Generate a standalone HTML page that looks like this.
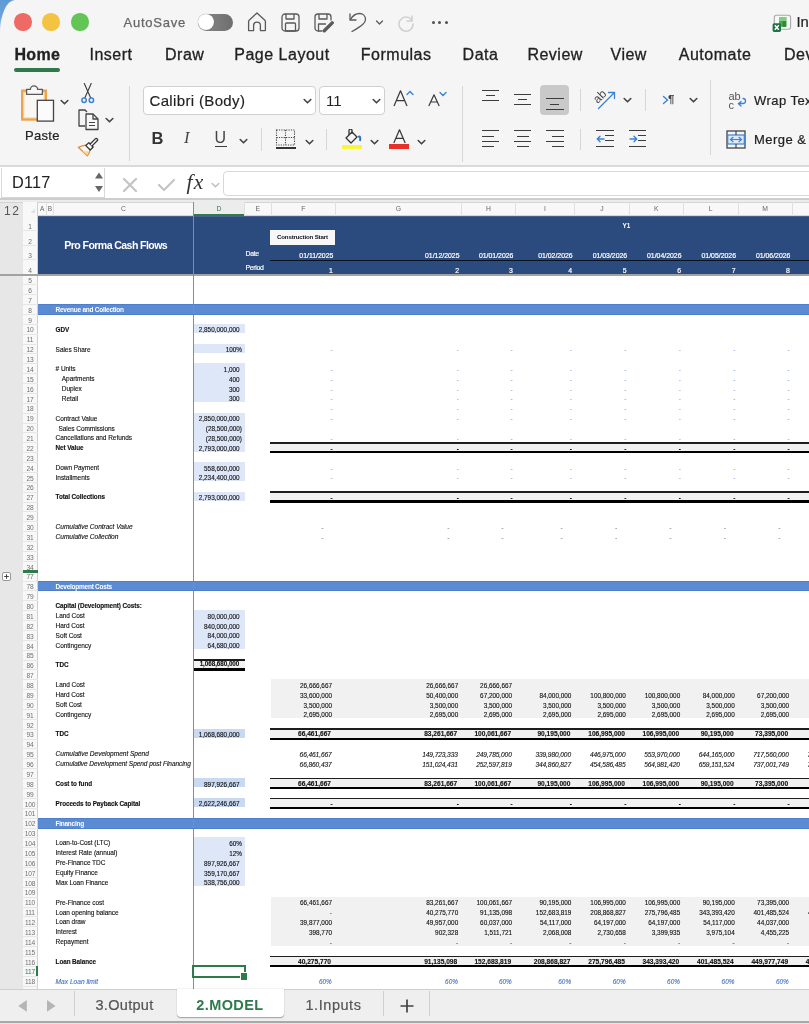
<!DOCTYPE html><html><head><meta charset="utf-8"><style>
*{margin:0;padding:0;box-sizing:border-box}
html,body{width:809px;height:1024px;overflow:hidden;background:#f5f5f5;font-family:'Liberation Sans', sans-serif}
.a{position:absolute}
.t{position:absolute;white-space:nowrap;line-height:1}
.c{position:absolute;white-space:nowrap;line-height:1;font-size:6.4px;color:#111;-webkit-text-stroke:0.12px currentColor}
.r{text-align:right}
.b{font-weight:bold}
.i{font-style:italic}
</style></head><body><div style="position:absolute;left:0;top:0;width:809px;height:1024px;overflow:hidden;will-change:transform">
<div class="a" style="left:0;top:0;width:40px;height:40px;background:linear-gradient(180deg,#5f9ad6 0%,#6aa3dc 45%,#e9f0f8 90%)"></div>
<div class="a" style="left:0;top:0;width:809px;height:1024px;background:#f5f5f5;border-top-left-radius:15px 33px"></div>
<div class="a" style="left:14.3px;top:13.3px;width:17.4px;height:17.4px;border-radius:50%;background:#ee6a65"></div>
<div class="a" style="left:42.3px;top:13.3px;width:17.4px;height:17.4px;border-radius:50%;background:#f4c342"></div>
<div class="a" style="left:71.3px;top:13.3px;width:17.4px;height:17.4px;border-radius:50%;background:#62c555"></div>
<div class="t" style="left:123.5px;top:15.8px;font-size:13px;letter-spacing:0.75px;color:#666;-webkit-text-stroke:0.25px #666">AutoSave</div>
<div class="a" style="left:197.5px;top:14px;width:35px;height:16.5px;border-radius:9px;background:linear-gradient(90deg,#8a8a8a,#6e6e6e)"></div>
<div class="a" style="left:198px;top:14.3px;width:16px;height:16px;border-radius:50%;background:#fff;box-shadow:0 0 1px rgba(0,0,0,.4)"></div>
<svg class="a" style="left:247px;top:12px" width="20" height="20" viewBox="0 0 20 20" fill="none" stroke="#5a5a5a" stroke-width="1.3" stroke-linecap="round" stroke-linejoin="round"><path d="M1.6 18.2 V9.6 Q1.6 8.6 2.4 7.9 L10 1 L17.6 7.9 Q18.4 8.6 18.4 9.6 V18.2 Q18.4 18.6 18 18.6 H13.4 V13.6 A3.4 3.4 0 0 0 6.6 13.6 V18.6 H2 Q1.6 18.6 1.6 18.2 Z"/></svg>
<svg class="a" style="left:281px;top:13px" width="19" height="19" viewBox="0 0 19 19" fill="none" stroke="#5a5a5a" stroke-width="1.3" stroke-linecap="round" stroke-linejoin="round"><rect x="1" y="1" width="17" height="17" rx="3"/><path d="M5 1.5 V6 H13 V1.5"/><rect x="4.5" y="10" width="10" height="8" rx="1"/></svg>
<svg class="a" style="left:314px;top:13px" width="21" height="20" viewBox="0 0 21 20" fill="none" stroke="#5a5a5a" stroke-width="1.3" stroke-linecap="round" stroke-linejoin="round"><path d="M8 18 H4 A3 3 0 0 1 1 15 V4 A3 3 0 0 1 4 1 H14 A3 3 0 0 1 17 4 V7"/><path d="M5 1.5 V6 H13 V1.5"/><path d="M4.5 18 V11 H11.5"/><path d="M10.3 17.8 L18.2 9.9" stroke-width="3.4"/></svg>
<svg class="a" style="left:348px;top:11px" width="20" height="22" viewBox="0 0 20 22" fill="none" stroke="#5a5a5a" stroke-width="1.3" stroke-linecap="round" stroke-linejoin="round"><path d="M2 3 V9 H8"/><path d="M2.5 8.5 C5 4 8 2.5 11.5 2.5 C15 2.5 17.5 5 17.5 8.5 C17.5 11.5 15 14 4 20.5"/></svg>
<svg class="a" style="left:375px;top:19px" width="9" height="7" viewBox="0 0 9 7" fill="none" stroke="#5a5a5a" stroke-width="1.3" stroke-linecap="round" stroke-linejoin="round"><path d="M1.5 2 L4.5 5 L7.5 2"/></svg>
<svg class="a" style="left:396px;top:12px" width="20" height="20" viewBox="0 0 20 20" fill="none" stroke="#cfcfcf" stroke-width="1.5" stroke-linecap="round"><path d="M16 4 V9 H11"/><path d="M16 8.5 A7 7 0 1 0 17 12"/></svg>
<div class="a" style="left:431.5px;top:21.2px;width:3px;height:3px;border-radius:50%;background:#505050"></div>
<div class="a" style="left:438.0px;top:21.2px;width:3px;height:3px;border-radius:50%;background:#505050"></div>
<div class="a" style="left:444.5px;top:21.2px;width:3px;height:3px;border-radius:50%;background:#505050"></div>
<svg class="a" style="left:772px;top:14px" width="20" height="19" viewBox="0 0 20 19"><rect x="2.3" y="1.3" width="16.3" height="14" rx="2.2" fill="#f7f7f7" stroke="#a9a9a9" stroke-width="1.1"/><rect x="7" y="3" width="7.3" height="9.8" fill="#4da84f"/><rect x="7" y="3" width="7.3" height="4" fill="#7fd07a"/><rect x="10.5" y="7" width="3.8" height="5.8" fill="#2f8a38"/><rect x="0.6" y="9.2" width="8.4" height="8.7" rx="1.6" fill="#1f7144"/><path d="M2.8 11.3 L6.8 15.8 M6.8 11.3 L2.8 15.8" stroke="#fff" stroke-width="1.5"/></svg>
<div class="t" style="left:796.5px;top:14.5px;font-size:14.8px;color:#222;-webkit-text-stroke:0.2px #222">In</div>
<div class="t" style="left:14.5px;top:47px;font-size:16px;letter-spacing:0.5px;color:#222;-webkit-text-stroke:0.3px #222;font-weight:bold;letter-spacing:0.3px">Home</div>
<div class="t" style="left:89.5px;top:47px;font-size:16px;letter-spacing:0.5px;color:#222;-webkit-text-stroke:0.3px #222;">Insert</div>
<div class="t" style="left:165px;top:47px;font-size:16px;letter-spacing:0.5px;color:#222;-webkit-text-stroke:0.3px #222;">Draw</div>
<div class="t" style="left:234.3px;top:47px;font-size:16px;letter-spacing:0.5px;color:#222;-webkit-text-stroke:0.3px #222;">Page Layout</div>
<div class="t" style="left:360.8px;top:47px;font-size:16px;letter-spacing:0.5px;color:#222;-webkit-text-stroke:0.3px #222;">Formulas</div>
<div class="t" style="left:462.6px;top:47px;font-size:16px;letter-spacing:0.5px;color:#222;-webkit-text-stroke:0.3px #222;">Data</div>
<div class="t" style="left:527.4px;top:47px;font-size:16px;letter-spacing:0.5px;color:#222;-webkit-text-stroke:0.3px #222;">Review</div>
<div class="t" style="left:610.5px;top:47px;font-size:16px;letter-spacing:0.5px;color:#222;-webkit-text-stroke:0.3px #222;">View</div>
<div class="t" style="left:678.8px;top:47px;font-size:16px;letter-spacing:0.5px;color:#222;-webkit-text-stroke:0.3px #222;">Automate</div>
<div class="t" style="left:784px;top:47px;font-size:16px;letter-spacing:0.5px;color:#222;-webkit-text-stroke:0.3px #222;">Dev</div>
<div class="a" style="left:14px;top:68px;width:46px;height:3.6px;border-radius:2px;background:#2f7a4b"></div>
<svg class="a" style="left:20px;top:84px" width="37" height="39" viewBox="0 0 37 39"><rect x="2.3" y="6.8" width="23.4" height="28.6" fill="#f8f7f4" stroke="#eea24f" stroke-width="2.6"/><rect x="3.8" y="8.3" width="20.4" height="25.6" fill="none" stroke="#f6d48e" stroke-width="1"/><path d="M6.6 10.4 V5.4 H10.4 A3.6 3.6 0 0 1 17.6 5.4 H22.4 V10.4 Z" fill="#f7f7f7" stroke="#5a5a5a" stroke-width="1.25" stroke-linejoin="round"/><rect x="17.3" y="16.3" width="16.2" height="20.8" fill="#fbfbfb" stroke="#444" stroke-width="1.3"/></svg>
<svg class="a" style="left:59.8px;top:99.2px" width="9" height="7" viewBox="0 0 9 7" fill="none" stroke="#444" stroke-width="1.6" stroke-linecap="round" stroke-linejoin="round"><path d="M1.2 1.5 L4.5 4.8 L7.8 1.5"/></svg>
<div class="t" style="left:25px;top:128.5px;font-size:13px;letter-spacing:0.3px;color:#222;-webkit-text-stroke:0.2px #222">Paste</div>
<svg class="a" style="left:80px;top:83px" width="16" height="21" viewBox="0 0 16 21" fill="none" stroke-linecap="round"><path d="M4.3 0.5 L10.6 14.8 M11.2 0.5 L4.9 14.8" stroke="#3a3a3a" stroke-width="1.1"/><circle cx="4.1" cy="17.3" r="2.2" stroke="#3b82d6" stroke-width="1.5" fill="#f5f5f5"/><circle cx="11.4" cy="17.3" r="2.2" stroke="#3b82d6" stroke-width="1.5" fill="#f5f5f5"/></svg>
<svg class="a" style="left:77px;top:109px" width="23" height="22" viewBox="0 0 23 22" fill="none" stroke="#444" stroke-width="1.3" stroke-linejoin="round"><path d="M8 17 H2 V1 H8 L10 3"/><path d="M9 5 H16 L21 10 V20.5 H9 Z" fill="#f7f7f7"/><path d="M16 5 V10 H21"/><path d="M12 13.5 H18 M12 16.5 H18" stroke-width="1"/></svg>
<svg class="a" style="left:104.5px;top:116.5px" width="9" height="7" viewBox="0 0 9 7" fill="none" stroke="#444" stroke-width="1.6" stroke-linecap="round" stroke-linejoin="round"><path d="M1.2 1.5 L4.5 4.8 L7.8 1.5"/></svg>
<svg class="a" style="left:77px;top:136px" width="22" height="21" viewBox="0 0 22 21" stroke-linejoin="round" stroke-linecap="round"><path d="M1.3 11.3 Q5 9.6 9.6 9 L13.4 12.8 Q12.6 16.8 10.3 19.8 Z" fill="#fafafa" stroke="#ea8d3a" stroke-width="1.3"/><path d="M5.5 15.3 L11.6 15.3 Q11.2 17.6 10.3 19.3 Z" fill="#f6d98a"/><path d="M8.8 9.6 L11.8 6.6 L16.2 11 L13.2 14 Z" fill="#fafafa" stroke="#333" stroke-width="1.3"/><path d="M13.2 8 L18.3 2.9 A1.3 1.3 0 0 1 20.2 4.8 L15.1 9.9" fill="#fafafa" stroke="#333" stroke-width="1.3"/></svg>
<div class="a" style="left:128.8px;top:85.5px;width:1px;height:75.5px;background:#d6d6d6"></div>
<div class="a" style="left:142.5px;top:85.6px;width:173px;height:29px;border:1px solid #d0d0d0;border-radius:4px;background:#fff"></div>
<div class="t" style="left:149.5px;top:92.5px;font-size:15px;letter-spacing:0.35px;color:#222;-webkit-text-stroke:0.15px #222">Calibri (Body)</div>
<svg class="a" style="left:302.5px;top:97.5px" width="9" height="7" viewBox="0 0 9 7" fill="none" stroke="#444" stroke-width="1.6" stroke-linecap="round" stroke-linejoin="round"><path d="M1.2 1.5 L4.5 4.8 L7.8 1.5"/></svg>
<div class="a" style="left:319px;top:85.6px;width:66px;height:29px;border:1px solid #d0d0d0;border-radius:4px;background:#fff"></div>
<div class="t" style="left:326px;top:92.5px;font-size:15px;color:#222">11</div>
<svg class="a" style="left:371.5px;top:97.5px" width="9" height="7" viewBox="0 0 9 7" fill="none" stroke="#444" stroke-width="1.6" stroke-linecap="round" stroke-linejoin="round"><path d="M1.2 1.5 L4.5 4.8 L7.8 1.5"/></svg>
<svg class="a" style="left:393px;top:90px" width="15" height="17" viewBox="0 0 15 17" fill="none" stroke="#3a3a3a" stroke-width="1.25" stroke-linejoin="round"><path d="M1 16 L7.5 0.8 L14 16 M3.4 10.6 H11.6"/></svg>
<svg class="a" style="left:405.5px;top:90px" width="8" height="6" viewBox="0 0 8 6" fill="none" stroke="#3b82d6" stroke-width="1.4" stroke-linecap="round"><path d="M1 4.5 L4 1.5 L7 4.5"/></svg>
<svg class="a" style="left:427.5px;top:94px" width="12" height="13" viewBox="0 0 12 13" fill="none" stroke="#3a3a3a" stroke-width="1.2" stroke-linejoin="round"><path d="M0.8 12 L6 0.8 L11.2 12 M2.6 8 H9.4"/></svg>
<svg class="a" style="left:438.5px;top:90.5px" width="8" height="6" viewBox="0 0 8 6" fill="none" stroke="#3b82d6" stroke-width="1.4" stroke-linecap="round"><path d="M1 1.5 L4 4.5 L7 1.5"/></svg>
<div class="t" style="left:151.5px;top:130px;font-size:16.5px;font-weight:bold;color:#333">B</div>
<div class="t" style="left:184px;top:130px;font-size:16.5px;font-style:italic;color:#444;font-family:Liberation Serif">I</div>
<div class="t" style="left:214.5px;top:130px;font-size:16px;color:#444">U</div>
<div class="a" style="left:214.5px;top:146.0px;width:12.0px;height:1px;background:#3c3c3c"></div>
<svg class="a" style="left:238.5px;top:137.5px" width="9" height="7" viewBox="0 0 9 7" fill="none" stroke="#444" stroke-width="1.6" stroke-linecap="round" stroke-linejoin="round"><path d="M1.2 1.5 L4.5 4.8 L7.8 1.5"/></svg>
<div class="a" style="left:260.9px;top:128px;width:1px;height:22.69999999999999px;background:#d6d6d6"></div>
<svg class="a" style="left:275px;top:129px" width="22" height="20" viewBox="0 0 22 20" fill="none" stroke="#444" stroke-width="1.1" stroke-dasharray="1.2 1.2"><rect x="1.5" y="1" width="18" height="15"/><path d="M10.5 1 V16 M1.5 8.5 H19.5"/></svg>
<div class="a" style="left:276px;top:147.2px;width:20px;height:1.6px;background:#333"></div>
<svg class="a" style="left:304.5px;top:138.5px" width="9" height="7" viewBox="0 0 9 7" fill="none" stroke="#444" stroke-width="1.6" stroke-linecap="round" stroke-linejoin="round"><path d="M1.2 1.5 L4.5 4.8 L7.8 1.5"/></svg>
<div class="a" style="left:326.2px;top:129px;width:1px;height:21px;background:#d6d6d6"></div>
<svg class="a" style="left:343px;top:129px" width="20" height="16" viewBox="0 0 20 16" fill="none" stroke="#333" stroke-width="1.3" stroke-linejoin="round"><path d="M3 9 L9 3 L14 8 L8 14 Z"/><path d="M6 6 V1.5 A1.5 1.5 0 0 1 9 1.5 V5"/><path d="M15 8 Q18 6 17 12" stroke="#2e6fc0" stroke-width="2"/></svg>
<div class="a" style="left:342px;top:144.5px;width:20px;height:4.7px;background:#f8f53a"></div>
<svg class="a" style="left:370px;top:138.5px" width="9" height="7" viewBox="0 0 9 7" fill="none" stroke="#444" stroke-width="1.6" stroke-linecap="round" stroke-linejoin="round"><path d="M1.2 1.5 L4.5 4.8 L7.8 1.5"/></svg>
<svg class="a" style="left:392.5px;top:129px" width="13" height="15" viewBox="0 0 13 15" fill="none" stroke="#3a3a3a" stroke-width="1.25" stroke-linejoin="round"><path d="M0.8 14 L6.5 0.8 L12.2 14 M2.8 9.4 H10.2"/></svg>
<div class="a" style="left:389px;top:144px;width:20px;height:5.2px;background:#e8302a"></div>
<svg class="a" style="left:416.5px;top:138.5px" width="9" height="7" viewBox="0 0 9 7" fill="none" stroke="#444" stroke-width="1.6" stroke-linecap="round" stroke-linejoin="round"><path d="M1.2 1.5 L4.5 4.8 L7.8 1.5"/></svg>
<div class="a" style="left:462.1px;top:85.5px;width:1px;height:76.0px;background:#d6d6d6"></div>
<div class="a" style="left:540.4px;top:85.2px;width:28.6px;height:29.5px;border-radius:4px;background:#c9c9c9"></div>
<div class="a" style="left:481.5px;top:90.0px;width:17.5px;height:1px;background:#3c3c3c"></div>
<div class="a" style="left:485.75px;top:95.0px;width:9.0px;height:1px;background:#3c3c3c"></div>
<div class="a" style="left:481.5px;top:100.0px;width:17.5px;height:1px;background:#3c3c3c"></div>
<div class="a" style="left:513.8px;top:94.0px;width:17.5px;height:1px;background:#3c3c3c"></div>
<div class="a" style="left:518.05px;top:99.0px;width:9.0px;height:1px;background:#3c3c3c"></div>
<div class="a" style="left:513.8px;top:104.0px;width:17.5px;height:1px;background:#3c3c3c"></div>
<div class="a" style="left:546.0px;top:98.0px;width:17.5px;height:1px;background:#3c3c3c"></div>
<div class="a" style="left:550.25px;top:104.0px;width:9.0px;height:1px;background:#3c3c3c"></div>
<div class="a" style="left:546.0px;top:109.0px;width:17.5px;height:1px;background:#3c3c3c"></div>
<div class="a" style="left:481.5px;top:130.0px;width:17.5px;height:1px;background:#3c3c3c"></div>
<div class="a" style="left:481.5px;top:136.0px;width:12.0px;height:1px;background:#3c3c3c"></div>
<div class="a" style="left:481.5px;top:141.0px;width:17.5px;height:1px;background:#3c3c3c"></div>
<div class="a" style="left:481.5px;top:146.0px;width:12.0px;height:1px;background:#3c3c3c"></div>
<div class="a" style="left:513.8px;top:130.0px;width:17.5px;height:1px;background:#3c3c3c"></div>
<div class="a" style="left:516.55px;top:136.0px;width:12.0px;height:1px;background:#3c3c3c"></div>
<div class="a" style="left:513.8px;top:141.0px;width:17.5px;height:1px;background:#3c3c3c"></div>
<div class="a" style="left:516.55px;top:146.0px;width:12.0px;height:1px;background:#3c3c3c"></div>
<div class="a" style="left:546.0px;top:130.0px;width:17.5px;height:1px;background:#3c3c3c"></div>
<div class="a" style="left:551.5px;top:136.0px;width:12.0px;height:1px;background:#3c3c3c"></div>
<div class="a" style="left:546.0px;top:141.0px;width:17.5px;height:1px;background:#3c3c3c"></div>
<div class="a" style="left:551.5px;top:146.0px;width:12.0px;height:1px;background:#3c3c3c"></div>
<div class="a" style="left:579.5px;top:89px;width:1px;height:21.599999999999994px;background:#d6d6d6"></div>
<div class="a" style="left:579.5px;top:128.6px;width:1px;height:21.900000000000006px;background:#d6d6d6"></div>
<svg class="a" style="left:594px;top:89px" width="23" height="21" viewBox="0 0 23 21"><text x="0" y="0" transform="translate(3.8 15) rotate(-45)" font-family="Liberation Sans" font-size="12" fill="#444">ab</text><path d="M4.5 19.5 L20 4 M14.5 3.5 H20.5 V9.5" fill="none" stroke="#3b82d6" stroke-width="1.3" stroke-linecap="round"/></svg>
<svg class="a" style="left:623px;top:97px" width="9" height="7" viewBox="0 0 9 7" fill="none" stroke="#444" stroke-width="1.6" stroke-linecap="round" stroke-linejoin="round"><path d="M1.2 1.5 L4.5 4.8 L7.8 1.5"/></svg>
<div class="a" style="left:644.8px;top:89px;width:1px;height:21.599999999999994px;background:#d6d6d6"></div>
<svg class="a" style="left:662px;top:95px" width="8" height="10" viewBox="0 0 8 10" fill="none" stroke="#3b82d6" stroke-width="1.4" stroke-linecap="round"><path d="M1.5 1.5 L5.5 5 L1.5 8.5"/></svg>
<div class="t" style="left:668px;top:94px;font-size:11.5px;font-weight:bold;color:#444">&#182;</div>
<svg class="a" style="left:688.5px;top:97px" width="9" height="7" viewBox="0 0 9 7" fill="none" stroke="#444" stroke-width="1.6" stroke-linecap="round" stroke-linejoin="round"><path d="M1.2 1.5 L4.5 4.8 L7.8 1.5"/></svg>
<div class="a" style="left:710.3px;top:79.5px;width:1px;height:75.5px;background:#d6d6d6"></div>
<div class="a" style="left:596.3px;top:130.0px;width:17.700000000000045px;height:1px;background:#3c3c3c"></div>
<div class="a" style="left:605.3px;top:135.0px;width:8.700000000000045px;height:1px;background:#3c3c3c"></div>
<div class="a" style="left:605.3px;top:140.0px;width:8.700000000000045px;height:1px;background:#3c3c3c"></div>
<div class="a" style="left:596.3px;top:146.0px;width:17.700000000000045px;height:1px;background:#3c3c3c"></div>
<svg class="a" style="left:596.3px;top:135px" width="9" height="8" viewBox="0 0 9 8" fill="none" stroke="#3b82d6" stroke-width="1.4" stroke-linecap="round" stroke-linejoin="round"><path d="M8 4 H1.5 M4 1.3 L1.3 4 L4 6.7"/></svg>
<div class="a" style="left:628.6px;top:130.0px;width:17.700000000000045px;height:1px;background:#3c3c3c"></div>
<div class="a" style="left:637.6px;top:135.0px;width:8.700000000000045px;height:1px;background:#3c3c3c"></div>
<div class="a" style="left:637.6px;top:140.0px;width:8.700000000000045px;height:1px;background:#3c3c3c"></div>
<div class="a" style="left:628.6px;top:146.0px;width:17.700000000000045px;height:1px;background:#3c3c3c"></div>
<svg class="a" style="left:628.6px;top:135px" width="9" height="8" viewBox="0 0 9 8" fill="none" stroke="#3b82d6" stroke-width="1.4" stroke-linecap="round" stroke-linejoin="round"><path d="M1 4 H7.5 M5 1.3 L7.7 4 L5 6.7"/></svg>
<svg class="a" style="left:728px;top:91px" width="20" height="20" viewBox="0 0 20 20"><text x="0.5" y="8.5" font-family="Liberation Sans" font-size="11" fill="#555">ab</text><text x="0.5" y="18.3" font-family="Liberation Sans" font-size="11" fill="#555">c</text><path d="M10.5 12.5 H15 A2.5 2.5 0 0 0 15 7.5 M13 10.5 L10.5 12.8 L13 15" fill="none" stroke="#3b82d6" stroke-width="1.3" stroke-linecap="round"/></svg>
<div class="t" style="left:754px;top:94.3px;font-size:13px;letter-spacing:0.45px;color:#222;-webkit-text-stroke:0.2px #222">Wrap Text</div>
<svg class="a" style="left:725.5px;top:129.5px" width="20" height="19" viewBox="0 0 20 19" fill="none"><rect x="1" y="1" width="18" height="17" stroke="#444" stroke-width="1.3"/><rect x="1.7" y="5" width="16.6" height="9" fill="#dbe9f8" stroke="#3b82d6" stroke-width="1.2"/><path d="M10 1 V5 M10 14 V18" stroke="#444" stroke-width="1.2"/><path d="M4.5 9.5 H15.5 M7 7.3 L4.5 9.5 L7 11.7 M13 7.3 L15.5 9.5 L13 11.7" stroke="#3b82d6" stroke-width="1.2" stroke-linecap="round"/></svg>
<div class="t" style="left:754px;top:132.7px;font-size:13px;letter-spacing:0.45px;color:#222;-webkit-text-stroke:0.2px #222">Merge &amp; Centre</div>
<div class="a" style="left:0;top:165.4px;width:809px;height:1.6px;background:#dadada"></div>
<div class="a" style="left:0;top:167px;width:809px;height:31.5px;background:#fff"></div>
<div class="a" style="left:0;top:198px;width:809px;height:1.8px;background:#cdcdcd"></div>
<div class="a" style="left:0;top:199.8px;width:809px;height:2px;background:#ececec"></div>
<div class="a" style="left:0;top:201.7px;width:809px;height:1px;background:#d4d4d4"></div>
<div class="a" style="left:1px;top:167.7px;width:104px;height:30.3px;border:1.2px solid #d8d8d8;border-top:none;background:#fff"></div>
<div class="t" style="left:12px;top:173.6px;font-size:16.3px;letter-spacing:0.2px;color:#222">D117</div>
<svg class="a" style="left:94px;top:172px" width="10" height="21" viewBox="0 0 10 21" fill="#666"><path d="M1 6.5 L5 0.5 L9 6.5 Z M1 14 L5 20 L9 14 Z"/></svg>
<svg class="a" style="left:122px;top:177px" width="16" height="16" viewBox="0 0 16 16" stroke="#c4c4c4" stroke-width="2.2" stroke-linecap="round"><path d="M2 2 L14 14 M14 2 L2 14"/></svg>
<svg class="a" style="left:157px;top:178px" width="19" height="14" viewBox="0 0 19 14" fill="none" stroke="#c4c4c4" stroke-width="2.2" stroke-linecap="round" stroke-linejoin="round"><path d="M2 7 L7 12 L17 2"/></svg>
<div class="t" style="left:186.5px;top:172px;font-size:21.5px;font-style:italic;color:#333;font-family:Liberation Serif;letter-spacing:1.2px">fx</div>
<svg class="a" style="left:211px;top:182px" width="9" height="7" viewBox="0 0 9 7" fill="none" stroke="#c0c0c0" stroke-width="1.6" stroke-linecap="round" stroke-linejoin="round"><path d="M1.2 1.5 L4.5 4.8 L7.8 1.5"/></svg>
<div class="a" style="left:223px;top:171px;width:600px;height:24.5px;border:1.2px solid #d8d8d8;border-radius:4px;background:#fff"></div>
<div class="a" style="left:0;top:202.7px;width:23px;height:786.5px;background:#e7e7e7"></div>
<div class="t" style="left:4px;top:204.5px;font-size:12px;color:#555;letter-spacing:0.5px">1<span style="margin-left:1px">2</span></div>
<div class="a" style="left:2.2px;top:571.9px;width:8.8px;height:8.8px;border:0.8px solid #9a9a9a;border-radius:2px;background:#fff"></div>
<svg class="a" style="left:2.2px;top:571.9px" width="9" height="9" viewBox="0 0 9 9" stroke="#444" stroke-width="1.1"><path d="M4.5 2.2 V6.8 M2.2 4.5 H6.8"/></svg>
<div class="a" style="left:38px;top:215.8px;width:771px;height:773.4000000000001px;background:#fff"></div>
<div class="a" style="left:23px;top:202.7px;width:786px;height:13.1px;background:#f8f8f8;border-bottom:1px solid #d4d4d4"></div>
<div class="a" style="left:23px;top:202.2px;width:15px;height:13.6px;background:#f8f8f8"></div>
<svg class="a" style="left:23px;top:202px" width="15" height="14" viewBox="0 0 15 14"><path d="M12 6.5 V11 H7.5 Z" fill="#e0e0e0"/></svg>
<div class="a" style="left:193.5px;top:202.2px;width:50.69999999999999px;height:13.6px;background:#ececec"></div>
<div class="a" style="left:193.5px;top:213.8px;width:50.69999999999999px;height:2px;background:#2f7a4b"></div>
<div class="a" style="left:46.0px;top:202.2px;width:1px;height:13.6px;background:#e0e0e0"></div>
<div class="t" style="left:38px;width:8.5px;top:205.5px;font-size:6.5px;color:#666;text-align:center">A</div>
<div class="a" style="left:53.0px;top:202.2px;width:1px;height:13.6px;background:#e0e0e0"></div>
<div class="t" style="left:46.5px;width:7.0px;top:205.5px;font-size:6.5px;color:#666;text-align:center">B</div>
<div class="a" style="left:193.0px;top:202.2px;width:1px;height:13.6px;background:#e0e0e0"></div>
<div class="t" style="left:53.5px;width:140.0px;top:205.5px;font-size:6.8px;color:#666;text-align:center">C</div>
<div class="a" style="left:243.7px;top:202.2px;width:1px;height:13.6px;background:#e0e0e0"></div>
<div class="t" style="left:193.5px;width:50.69999999999999px;top:205.5px;font-size:6.8px;color:#2f7a4b;text-align:center">D</div>
<div class="a" style="left:270.8px;top:202.2px;width:1px;height:13.6px;background:#e0e0e0"></div>
<div class="t" style="left:244.2px;width:27.100000000000023px;top:205.5px;font-size:6.8px;color:#666;text-align:center">E</div>
<div class="a" style="left:334.8px;top:202.2px;width:1px;height:13.6px;background:#e0e0e0"></div>
<div class="t" style="left:271.3px;width:64.0px;top:205.5px;font-size:6.8px;color:#666;text-align:center">F</div>
<div class="a" style="left:461.0px;top:202.2px;width:1px;height:13.6px;background:#e0e0e0"></div>
<div class="t" style="left:335.3px;width:126.19999999999999px;top:205.5px;font-size:6.8px;color:#666;text-align:center">G</div>
<div class="a" style="left:514.9px;top:202.2px;width:1px;height:13.6px;background:#e0e0e0"></div>
<div class="t" style="left:461.5px;width:53.89999999999998px;top:205.5px;font-size:6.8px;color:#666;text-align:center">H</div>
<div class="a" style="left:574.2px;top:202.2px;width:1px;height:13.6px;background:#e0e0e0"></div>
<div class="t" style="left:515.4px;width:59.30000000000007px;top:205.5px;font-size:6.8px;color:#666;text-align:center">I</div>
<div class="a" style="left:628.7px;top:202.2px;width:1px;height:13.6px;background:#e0e0e0"></div>
<div class="t" style="left:574.7px;width:54.5px;top:205.5px;font-size:6.8px;color:#666;text-align:center">J</div>
<div class="a" style="left:683.0px;top:202.2px;width:1px;height:13.6px;background:#e0e0e0"></div>
<div class="t" style="left:629.2px;width:54.299999999999955px;top:205.5px;font-size:6.8px;color:#666;text-align:center">K</div>
<div class="a" style="left:737.5px;top:202.2px;width:1px;height:13.6px;background:#e0e0e0"></div>
<div class="t" style="left:683.5px;width:54.5px;top:205.5px;font-size:6.8px;color:#666;text-align:center">L</div>
<div class="a" style="left:791.9px;top:202.2px;width:1px;height:13.6px;background:#e0e0e0"></div>
<div class="t" style="left:738px;width:54.39999999999998px;top:205.5px;font-size:6.8px;color:#666;text-align:center">M</div>
<div class="a" style="left:846.3px;top:202.2px;width:1px;height:13.6px;background:#e0e0e0"></div>
<div class="a" style="left:23px;top:215.8px;width:14.6px;height:773.4000000000001px;background:#f8f8f8;border-right:1px solid #cfcfcf"></div>
<div class="a" style="left:37.3px;top:202.2px;width:1px;height:13.6px;background:#d0d0d0"></div>
<div class="a" style="left:23px;top:230.07500000000002px;width:14.6px;height:1px;background:#e6e6e6"></div>
<div class="t" style="left:23px;width:14px;top:223.87500000000003px;font-size:6.6px;color:#707070;text-align:center;letter-spacing:-0.1px">1</div>
<div class="a" style="left:23px;top:244.775px;width:14.6px;height:1px;background:#e6e6e6"></div>
<div class="t" style="left:23px;width:14px;top:238.57500000000002px;font-size:6.6px;color:#707070;text-align:center;letter-spacing:-0.1px">2</div>
<div class="a" style="left:23px;top:259.475px;width:14.6px;height:1px;background:#e6e6e6"></div>
<div class="t" style="left:23px;width:14px;top:253.27500000000003px;font-size:6.6px;color:#707070;text-align:center;letter-spacing:-0.1px">3</div>
<div class="a" style="left:23px;top:274.17499999999995px;width:14.6px;height:1px;background:#e6e6e6"></div>
<div class="t" style="left:23px;width:14px;top:267.97499999999997px;font-size:6.6px;color:#707070;text-align:center;letter-spacing:-0.1px">4</div>
<div class="a" style="left:23px;top:284.277px;width:14.6px;height:1px;background:#e6e6e6"></div>
<div class="t" style="left:23px;width:14px;top:278.077px;font-size:6.6px;color:#707070;text-align:center;letter-spacing:-0.1px">5</div>
<div class="a" style="left:23px;top:294.154px;width:14.6px;height:1px;background:#e6e6e6"></div>
<div class="t" style="left:23px;width:14px;top:287.954px;font-size:6.6px;color:#707070;text-align:center;letter-spacing:-0.1px">6</div>
<div class="a" style="left:23px;top:304.031px;width:14.6px;height:1px;background:#e6e6e6"></div>
<div class="t" style="left:23px;width:14px;top:297.831px;font-size:6.6px;color:#707070;text-align:center;letter-spacing:-0.1px">7</div>
<div class="a" style="left:23px;top:313.90799999999996px;width:14.6px;height:1px;background:#e6e6e6"></div>
<div class="t" style="left:23px;width:14px;top:307.70799999999997px;font-size:6.6px;color:#707070;text-align:center;letter-spacing:-0.1px">8</div>
<div class="a" style="left:23px;top:323.78499999999997px;width:14.6px;height:1px;background:#e6e6e6"></div>
<div class="t" style="left:23px;width:14px;top:317.585px;font-size:6.6px;color:#707070;text-align:center;letter-spacing:-0.1px">9</div>
<div class="a" style="left:23px;top:333.662px;width:14.6px;height:1px;background:#e6e6e6"></div>
<div class="t" style="left:23px;width:14px;top:327.462px;font-size:6.6px;color:#707070;text-align:center;letter-spacing:-0.1px">10</div>
<div class="a" style="left:23px;top:343.539px;width:14.6px;height:1px;background:#e6e6e6"></div>
<div class="t" style="left:23px;width:14px;top:337.339px;font-size:6.6px;color:#707070;text-align:center;letter-spacing:-0.1px">11</div>
<div class="a" style="left:23px;top:353.416px;width:14.6px;height:1px;background:#e6e6e6"></div>
<div class="t" style="left:23px;width:14px;top:347.216px;font-size:6.6px;color:#707070;text-align:center;letter-spacing:-0.1px">12</div>
<div class="a" style="left:23px;top:363.293px;width:14.6px;height:1px;background:#e6e6e6"></div>
<div class="t" style="left:23px;width:14px;top:357.093px;font-size:6.6px;color:#707070;text-align:center;letter-spacing:-0.1px">13</div>
<div class="a" style="left:23px;top:373.17px;width:14.6px;height:1px;background:#e6e6e6"></div>
<div class="t" style="left:23px;width:14px;top:366.97px;font-size:6.6px;color:#707070;text-align:center;letter-spacing:-0.1px">14</div>
<div class="a" style="left:23px;top:383.04699999999997px;width:14.6px;height:1px;background:#e6e6e6"></div>
<div class="t" style="left:23px;width:14px;top:376.847px;font-size:6.6px;color:#707070;text-align:center;letter-spacing:-0.1px">15</div>
<div class="a" style="left:23px;top:392.924px;width:14.6px;height:1px;background:#e6e6e6"></div>
<div class="t" style="left:23px;width:14px;top:386.724px;font-size:6.6px;color:#707070;text-align:center;letter-spacing:-0.1px">16</div>
<div class="a" style="left:23px;top:402.801px;width:14.6px;height:1px;background:#e6e6e6"></div>
<div class="t" style="left:23px;width:14px;top:396.601px;font-size:6.6px;color:#707070;text-align:center;letter-spacing:-0.1px">17</div>
<div class="a" style="left:23px;top:412.678px;width:14.6px;height:1px;background:#e6e6e6"></div>
<div class="t" style="left:23px;width:14px;top:406.478px;font-size:6.6px;color:#707070;text-align:center;letter-spacing:-0.1px">18</div>
<div class="a" style="left:23px;top:422.555px;width:14.6px;height:1px;background:#e6e6e6"></div>
<div class="t" style="left:23px;width:14px;top:416.355px;font-size:6.6px;color:#707070;text-align:center;letter-spacing:-0.1px">19</div>
<div class="a" style="left:23px;top:432.43199999999996px;width:14.6px;height:1px;background:#e6e6e6"></div>
<div class="t" style="left:23px;width:14px;top:426.23199999999997px;font-size:6.6px;color:#707070;text-align:center;letter-spacing:-0.1px">20</div>
<div class="a" style="left:23px;top:442.309px;width:14.6px;height:1px;background:#e6e6e6"></div>
<div class="t" style="left:23px;width:14px;top:436.10900000000004px;font-size:6.6px;color:#707070;text-align:center;letter-spacing:-0.1px">21</div>
<div class="a" style="left:23px;top:452.186px;width:14.6px;height:1px;background:#e6e6e6"></div>
<div class="t" style="left:23px;width:14px;top:445.986px;font-size:6.6px;color:#707070;text-align:center;letter-spacing:-0.1px">22</div>
<div class="a" style="left:23px;top:462.063px;width:14.6px;height:1px;background:#e6e6e6"></div>
<div class="t" style="left:23px;width:14px;top:455.863px;font-size:6.6px;color:#707070;text-align:center;letter-spacing:-0.1px">23</div>
<div class="a" style="left:23px;top:471.94px;width:14.6px;height:1px;background:#e6e6e6"></div>
<div class="t" style="left:23px;width:14px;top:465.74px;font-size:6.6px;color:#707070;text-align:center;letter-spacing:-0.1px">24</div>
<div class="a" style="left:23px;top:481.817px;width:14.6px;height:1px;background:#e6e6e6"></div>
<div class="t" style="left:23px;width:14px;top:475.617px;font-size:6.6px;color:#707070;text-align:center;letter-spacing:-0.1px">25</div>
<div class="a" style="left:23px;top:491.694px;width:14.6px;height:1px;background:#e6e6e6"></div>
<div class="t" style="left:23px;width:14px;top:485.494px;font-size:6.6px;color:#707070;text-align:center;letter-spacing:-0.1px">26</div>
<div class="a" style="left:23px;top:501.57099999999997px;width:14.6px;height:1px;background:#e6e6e6"></div>
<div class="t" style="left:23px;width:14px;top:495.371px;font-size:6.6px;color:#707070;text-align:center;letter-spacing:-0.1px">27</div>
<div class="a" style="left:23px;top:511.44800000000004px;width:14.6px;height:1px;background:#e6e6e6"></div>
<div class="t" style="left:23px;width:14px;top:505.24800000000005px;font-size:6.6px;color:#707070;text-align:center;letter-spacing:-0.1px">28</div>
<div class="a" style="left:23px;top:521.3249999999999px;width:14.6px;height:1px;background:#e6e6e6"></div>
<div class="t" style="left:23px;width:14px;top:515.1249999999999px;font-size:6.6px;color:#707070;text-align:center;letter-spacing:-0.1px">29</div>
<div class="a" style="left:23px;top:531.202px;width:14.6px;height:1px;background:#e6e6e6"></div>
<div class="t" style="left:23px;width:14px;top:525.002px;font-size:6.6px;color:#707070;text-align:center;letter-spacing:-0.1px">30</div>
<div class="a" style="left:23px;top:541.079px;width:14.6px;height:1px;background:#e6e6e6"></div>
<div class="t" style="left:23px;width:14px;top:534.8789999999999px;font-size:6.6px;color:#707070;text-align:center;letter-spacing:-0.1px">31</div>
<div class="a" style="left:23px;top:550.9559999999999px;width:14.6px;height:1px;background:#e6e6e6"></div>
<div class="t" style="left:23px;width:14px;top:544.7559999999999px;font-size:6.6px;color:#707070;text-align:center;letter-spacing:-0.1px">32</div>
<div class="a" style="left:23px;top:560.833px;width:14.6px;height:1px;background:#e6e6e6"></div>
<div class="t" style="left:23px;width:14px;top:554.6329999999999px;font-size:6.6px;color:#707070;text-align:center;letter-spacing:-0.1px">33</div>
<div class="a" style="left:23px;top:570.7099999999999px;width:14.6px;height:1px;background:#e6e6e6"></div>
<div class="t" style="left:23px;width:14px;top:564.5099999999999px;font-size:6.6px;color:#707070;text-align:center;letter-spacing:-0.1px">34</div>
<div class="a" style="left:23px;top:580.587px;width:14.6px;height:1px;background:#e6e6e6"></div>
<div class="t" style="left:23px;width:14px;top:574.387px;font-size:6.6px;color:#707070;text-align:center;letter-spacing:-0.1px">77</div>
<div class="a" style="left:23px;top:590.4639999999999px;width:14.6px;height:1px;background:#e6e6e6"></div>
<div class="t" style="left:23px;width:14px;top:584.2639999999999px;font-size:6.6px;color:#707070;text-align:center;letter-spacing:-0.1px">78</div>
<div class="a" style="left:23px;top:600.3409999999999px;width:14.6px;height:1px;background:#e6e6e6"></div>
<div class="t" style="left:23px;width:14px;top:594.1409999999998px;font-size:6.6px;color:#707070;text-align:center;letter-spacing:-0.1px">79</div>
<div class="a" style="left:23px;top:610.218px;width:14.6px;height:1px;background:#e6e6e6"></div>
<div class="t" style="left:23px;width:14px;top:604.0179999999999px;font-size:6.6px;color:#707070;text-align:center;letter-spacing:-0.1px">80</div>
<div class="a" style="left:23px;top:620.095px;width:14.6px;height:1px;background:#e6e6e6"></div>
<div class="t" style="left:23px;width:14px;top:613.895px;font-size:6.6px;color:#707070;text-align:center;letter-spacing:-0.1px">81</div>
<div class="a" style="left:23px;top:629.972px;width:14.6px;height:1px;background:#e6e6e6"></div>
<div class="t" style="left:23px;width:14px;top:623.7719999999999px;font-size:6.6px;color:#707070;text-align:center;letter-spacing:-0.1px">82</div>
<div class="a" style="left:23px;top:639.8489999999999px;width:14.6px;height:1px;background:#e6e6e6"></div>
<div class="t" style="left:23px;width:14px;top:633.6489999999999px;font-size:6.6px;color:#707070;text-align:center;letter-spacing:-0.1px">83</div>
<div class="a" style="left:23px;top:649.7259999999999px;width:14.6px;height:1px;background:#e6e6e6"></div>
<div class="t" style="left:23px;width:14px;top:643.5259999999998px;font-size:6.6px;color:#707070;text-align:center;letter-spacing:-0.1px">84</div>
<div class="a" style="left:23px;top:659.603px;width:14.6px;height:1px;background:#e6e6e6"></div>
<div class="t" style="left:23px;width:14px;top:653.4029999999999px;font-size:6.6px;color:#707070;text-align:center;letter-spacing:-0.1px">85</div>
<div class="a" style="left:23px;top:669.48px;width:14.6px;height:1px;background:#e6e6e6"></div>
<div class="t" style="left:23px;width:14px;top:663.28px;font-size:6.6px;color:#707070;text-align:center;letter-spacing:-0.1px">86</div>
<div class="a" style="left:23px;top:679.357px;width:14.6px;height:1px;background:#e6e6e6"></div>
<div class="t" style="left:23px;width:14px;top:673.1569999999999px;font-size:6.6px;color:#707070;text-align:center;letter-spacing:-0.1px">87</div>
<div class="a" style="left:23px;top:689.2339999999999px;width:14.6px;height:1px;background:#e6e6e6"></div>
<div class="t" style="left:23px;width:14px;top:683.0339999999999px;font-size:6.6px;color:#707070;text-align:center;letter-spacing:-0.1px">88</div>
<div class="a" style="left:23px;top:699.1109999999999px;width:14.6px;height:1px;background:#e6e6e6"></div>
<div class="t" style="left:23px;width:14px;top:692.9109999999998px;font-size:6.6px;color:#707070;text-align:center;letter-spacing:-0.1px">89</div>
<div class="a" style="left:23px;top:708.9879999999999px;width:14.6px;height:1px;background:#e6e6e6"></div>
<div class="t" style="left:23px;width:14px;top:702.7879999999999px;font-size:6.6px;color:#707070;text-align:center;letter-spacing:-0.1px">90</div>
<div class="a" style="left:23px;top:718.865px;width:14.6px;height:1px;background:#e6e6e6"></div>
<div class="t" style="left:23px;width:14px;top:712.665px;font-size:6.6px;color:#707070;text-align:center;letter-spacing:-0.1px">91</div>
<div class="a" style="left:23px;top:728.742px;width:14.6px;height:1px;background:#e6e6e6"></div>
<div class="t" style="left:23px;width:14px;top:722.5419999999999px;font-size:6.6px;color:#707070;text-align:center;letter-spacing:-0.1px">92</div>
<div class="a" style="left:23px;top:738.6189999999999px;width:14.6px;height:1px;background:#e6e6e6"></div>
<div class="t" style="left:23px;width:14px;top:732.4189999999999px;font-size:6.6px;color:#707070;text-align:center;letter-spacing:-0.1px">93</div>
<div class="a" style="left:23px;top:748.496px;width:14.6px;height:1px;background:#e6e6e6"></div>
<div class="t" style="left:23px;width:14px;top:742.2959999999999px;font-size:6.6px;color:#707070;text-align:center;letter-spacing:-0.1px">94</div>
<div class="a" style="left:23px;top:758.3729999999999px;width:14.6px;height:1px;background:#e6e6e6"></div>
<div class="t" style="left:23px;width:14px;top:752.1729999999999px;font-size:6.6px;color:#707070;text-align:center;letter-spacing:-0.1px">95</div>
<div class="a" style="left:23px;top:768.25px;width:14.6px;height:1px;background:#e6e6e6"></div>
<div class="t" style="left:23px;width:14px;top:762.05px;font-size:6.6px;color:#707070;text-align:center;letter-spacing:-0.1px">96</div>
<div class="a" style="left:23px;top:778.127px;width:14.6px;height:1px;background:#e6e6e6"></div>
<div class="t" style="left:23px;width:14px;top:771.9269999999999px;font-size:6.6px;color:#707070;text-align:center;letter-spacing:-0.1px">97</div>
<div class="a" style="left:23px;top:788.0039999999999px;width:14.6px;height:1px;background:#e6e6e6"></div>
<div class="t" style="left:23px;width:14px;top:781.8039999999999px;font-size:6.6px;color:#707070;text-align:center;letter-spacing:-0.1px">98</div>
<div class="a" style="left:23px;top:797.881px;width:14.6px;height:1px;background:#e6e6e6"></div>
<div class="t" style="left:23px;width:14px;top:791.6809999999999px;font-size:6.6px;color:#707070;text-align:center;letter-spacing:-0.1px">99</div>
<div class="a" style="left:23px;top:807.7579999999999px;width:14.6px;height:1px;background:#e6e6e6"></div>
<div class="t" style="left:23px;width:14px;top:801.5579999999999px;font-size:6.6px;color:#707070;text-align:center;letter-spacing:-0.1px">100</div>
<div class="a" style="left:23px;top:817.635px;width:14.6px;height:1px;background:#e6e6e6"></div>
<div class="t" style="left:23px;width:14px;top:811.435px;font-size:6.6px;color:#707070;text-align:center;letter-spacing:-0.1px">101</div>
<div class="a" style="left:23px;top:827.512px;width:14.6px;height:1px;background:#e6e6e6"></div>
<div class="t" style="left:23px;width:14px;top:821.3119999999999px;font-size:6.6px;color:#707070;text-align:center;letter-spacing:-0.1px">102</div>
<div class="a" style="left:23px;top:837.389px;width:14.6px;height:1px;background:#e6e6e6"></div>
<div class="t" style="left:23px;width:14px;top:831.189px;font-size:6.6px;color:#707070;text-align:center;letter-spacing:-0.1px">103</div>
<div class="a" style="left:23px;top:847.266px;width:14.6px;height:1px;background:#e6e6e6"></div>
<div class="t" style="left:23px;width:14px;top:841.0659999999999px;font-size:6.6px;color:#707070;text-align:center;letter-spacing:-0.1px">104</div>
<div class="a" style="left:23px;top:857.1429999999999px;width:14.6px;height:1px;background:#e6e6e6"></div>
<div class="t" style="left:23px;width:14px;top:850.9429999999999px;font-size:6.6px;color:#707070;text-align:center;letter-spacing:-0.1px">105</div>
<div class="a" style="left:23px;top:867.02px;width:14.6px;height:1px;background:#e6e6e6"></div>
<div class="t" style="left:23px;width:14px;top:860.8199999999999px;font-size:6.6px;color:#707070;text-align:center;letter-spacing:-0.1px">106</div>
<div class="a" style="left:23px;top:876.8969999999999px;width:14.6px;height:1px;background:#e6e6e6"></div>
<div class="t" style="left:23px;width:14px;top:870.6969999999999px;font-size:6.6px;color:#707070;text-align:center;letter-spacing:-0.1px">107</div>
<div class="a" style="left:23px;top:886.774px;width:14.6px;height:1px;background:#e6e6e6"></div>
<div class="t" style="left:23px;width:14px;top:880.574px;font-size:6.6px;color:#707070;text-align:center;letter-spacing:-0.1px">108</div>
<div class="a" style="left:23px;top:896.651px;width:14.6px;height:1px;background:#e6e6e6"></div>
<div class="t" style="left:23px;width:14px;top:890.4509999999999px;font-size:6.6px;color:#707070;text-align:center;letter-spacing:-0.1px">109</div>
<div class="a" style="left:23px;top:906.528px;width:14.6px;height:1px;background:#e6e6e6"></div>
<div class="t" style="left:23px;width:14px;top:900.328px;font-size:6.6px;color:#707070;text-align:center;letter-spacing:-0.1px">110</div>
<div class="a" style="left:23px;top:916.405px;width:14.6px;height:1px;background:#e6e6e6"></div>
<div class="t" style="left:23px;width:14px;top:910.2049999999999px;font-size:6.6px;color:#707070;text-align:center;letter-spacing:-0.1px">111</div>
<div class="a" style="left:23px;top:926.2819999999999px;width:14.6px;height:1px;background:#e6e6e6"></div>
<div class="t" style="left:23px;width:14px;top:920.0819999999999px;font-size:6.6px;color:#707070;text-align:center;letter-spacing:-0.1px">112</div>
<div class="a" style="left:23px;top:936.159px;width:14.6px;height:1px;background:#e6e6e6"></div>
<div class="t" style="left:23px;width:14px;top:929.959px;font-size:6.6px;color:#707070;text-align:center;letter-spacing:-0.1px">113</div>
<div class="a" style="left:23px;top:946.036px;width:14.6px;height:1px;background:#e6e6e6"></div>
<div class="t" style="left:23px;width:14px;top:939.8359999999999px;font-size:6.6px;color:#707070;text-align:center;letter-spacing:-0.1px">114</div>
<div class="a" style="left:23px;top:955.913px;width:14.6px;height:1px;background:#e6e6e6"></div>
<div class="t" style="left:23px;width:14px;top:949.713px;font-size:6.6px;color:#707070;text-align:center;letter-spacing:-0.1px">115</div>
<div class="a" style="left:23px;top:965.79px;width:14.6px;height:1px;background:#e6e6e6"></div>
<div class="t" style="left:23px;width:14px;top:959.5899999999999px;font-size:6.6px;color:#707070;text-align:center;letter-spacing:-0.1px">116</div>
<div class="a" style="left:23px;top:975.667px;width:14.6px;height:1px;background:#e6e6e6"></div>
<div class="t" style="left:23px;width:14px;top:969.467px;font-size:6.6px;color:#2f7a4b;text-align:center;letter-spacing:-0.1px">117</div>
<div class="a" style="left:23px;top:985.544px;width:14.6px;height:1px;background:#e6e6e6"></div>
<div class="t" style="left:23px;width:14px;top:979.3439999999999px;font-size:6.6px;color:#707070;text-align:center;letter-spacing:-0.1px">118</div>
<div class="a" style="left:23px;top:569.7px;width:15px;height:3.3px;background:#2f7a4b"></div>
<div class="a" style="left:35.8px;top:966.2900000000001px;width:2.2px;height:9.9px;background:#2f7a4b"></div>
<div class="a" style="left:38px;top:216.3px;width:771px;height:57.5px;background:#2b4a7d"></div>
<div class="a" style="left:38px;top:215.8px;width:771px;height:1.2px;background:#4b6088"></div>
<div class="t b" style="left:38px;width:155.5px;top:239.5px;font-size:10.6px;letter-spacing:-0.6px;color:#fff;text-align:center">Pro Forma Cash Flows</div>
<div class="a" style="left:270.1px;top:229.8px;width:64.7px;height:14.8px;background:#f7f7f7"></div>
<div class="t b" style="left:270.1px;width:64.7px;top:234.3px;font-size:6.1px;letter-spacing:-0.15px;color:#111;text-align:center">Construction Start</div>
<div class="t" style="left:245.6px;top:250.5px;font-size:6.9px;letter-spacing:-0.35px;color:#fff;-webkit-text-stroke:0.15px #fff">Date</div>
<div class="t" style="left:245.6px;top:265px;font-size:6.9px;letter-spacing:-0.35px;color:#fff;-webkit-text-stroke:0.15px #fff">Period</div>
<div class="a" style="left:270.3px;top:259.5px;width:539px;height:1.6px;background:#0a1220"></div>
<div class="t b" style="left:622.4px;top:222.5px;font-size:6.4px;color:#fff">Y1</div>
<div class="t" style="right:475.7px;top:253.1px;font-size:6.9px;color:#fff;-webkit-text-stroke:0.2px #fff">01/11/2025</div>
<div class="t" style="right:476.2px;top:267.8px;font-size:6.9px;color:#fff;-webkit-text-stroke:0.2px #fff">1</div>
<div class="t" style="right:349.5px;top:253.1px;font-size:6.9px;color:#fff;-webkit-text-stroke:0.2px #fff">01/12/2025</div>
<div class="t" style="right:350.0px;top:267.8px;font-size:6.9px;color:#fff;-webkit-text-stroke:0.2px #fff">2</div>
<div class="t" style="right:295.6px;top:253.1px;font-size:6.9px;color:#fff;-webkit-text-stroke:0.2px #fff">01/01/2026</div>
<div class="t" style="right:296.1px;top:267.8px;font-size:6.9px;color:#fff;-webkit-text-stroke:0.2px #fff">3</div>
<div class="t" style="right:236.29999999999995px;top:253.1px;font-size:6.9px;color:#fff;-webkit-text-stroke:0.2px #fff">01/02/2026</div>
<div class="t" style="right:236.79999999999995px;top:267.8px;font-size:6.9px;color:#fff;-webkit-text-stroke:0.2px #fff">4</div>
<div class="t" style="right:181.79999999999995px;top:253.1px;font-size:6.9px;color:#fff;-webkit-text-stroke:0.2px #fff">01/03/2026</div>
<div class="t" style="right:182.29999999999995px;top:267.8px;font-size:6.9px;color:#fff;-webkit-text-stroke:0.2px #fff">5</div>
<div class="t" style="right:127.5px;top:253.1px;font-size:6.9px;color:#fff;-webkit-text-stroke:0.2px #fff">01/04/2026</div>
<div class="t" style="right:128.0px;top:267.8px;font-size:6.9px;color:#fff;-webkit-text-stroke:0.2px #fff">6</div>
<div class="t" style="right:73px;top:253.1px;font-size:6.9px;color:#fff;-webkit-text-stroke:0.2px #fff">01/05/2026</div>
<div class="t" style="right:73.5px;top:267.8px;font-size:6.9px;color:#fff;-webkit-text-stroke:0.2px #fff">7</div>
<div class="t" style="right:18.600000000000023px;top:253.1px;font-size:6.9px;color:#fff;-webkit-text-stroke:0.2px #fff">01/06/2026</div>
<div class="t" style="right:19.100000000000023px;top:267.8px;font-size:6.9px;color:#fff;-webkit-text-stroke:0.2px #fff">8</div>
<div class="t" style="right:-35.799999999999955px;top:253.1px;font-size:6.9px;color:#fff;-webkit-text-stroke:0.2px #fff">01/07/2026</div>
<div class="t" style="right:-35.299999999999955px;top:267.8px;font-size:6.9px;color:#fff;-webkit-text-stroke:0.2px #fff">9</div>
<div class="a" style="left:0;top:274.1px;width:809px;height:1.9px;background:#a2a2a2"></div>
<div class="a" style="left:193px;top:202.2px;width:1.3px;height:787.0px;background:#8c8c8c"></div>
<div class="a" style="left:38px;top:304.23099999999994px;width:155px;height:10.677000000000001px;background:#5b8bd3"></div>
<div class="a" style="left:194.3px;top:304.23099999999994px;width:615px;height:10.677000000000001px;background:#5b8bd3"></div>
<div class="a" style="left:38px;top:304.23099999999994px;width:771px;height:1px;background:#4f7fcb"></div>
<div class="a" style="left:38px;top:313.90799999999996px;width:771px;height:1px;background:#4f7fcb"></div>
<div class="t b" style="left:55.5px;top:307.23px;font-size:6.5px;letter-spacing:-0.25px;color:#fff">Revenue and Collection</div>
<div class="a" style="left:38px;top:580.787px;width:155px;height:10.677000000000001px;background:#5b8bd3"></div>
<div class="a" style="left:194.3px;top:580.787px;width:615px;height:10.677000000000001px;background:#5b8bd3"></div>
<div class="a" style="left:38px;top:580.787px;width:771px;height:1px;background:#4f7fcb"></div>
<div class="a" style="left:38px;top:590.4639999999999px;width:771px;height:1px;background:#4f7fcb"></div>
<div class="t b" style="left:55.5px;top:583.78px;font-size:6.5px;letter-spacing:-0.25px;color:#fff">Development Costs</div>
<div class="a" style="left:38px;top:817.835px;width:155px;height:10.677000000000001px;background:#5b8bd3"></div>
<div class="a" style="left:194.3px;top:817.835px;width:615px;height:10.677000000000001px;background:#5b8bd3"></div>
<div class="a" style="left:38px;top:817.835px;width:771px;height:1px;background:#4f7fcb"></div>
<div class="a" style="left:38px;top:827.512px;width:771px;height:1px;background:#4f7fcb"></div>
<div class="t b" style="left:55.5px;top:820.83px;font-size:6.5px;letter-spacing:-0.25px;color:#fff">Financing</div>
<div class="a" style="left:194.3px;top:323.885px;width:50.29999999999998px;height:9.276999999999987px;background:#dde7f8"></div>
<div class="a" style="left:194.3px;top:343.639px;width:50.29999999999998px;height:9.276999999999987px;background:#dde7f8"></div>
<div class="a" style="left:194.3px;top:363.39300000000003px;width:50.29999999999998px;height:38.90799999999996px;background:#dde7f8"></div>
<div class="a" style="left:194.3px;top:412.778px;width:50.29999999999998px;height:38.90799999999996px;background:#dde7f8"></div>
<div class="a" style="left:194.3px;top:462.163px;width:50.29999999999998px;height:19.153999999999996px;background:#dde7f8"></div>
<div class="a" style="left:194.3px;top:491.794px;width:50.29999999999998px;height:9.276999999999987px;background:#dde7f8"></div>
<div class="a" style="left:194.3px;top:610.3180000000001px;width:50.29999999999998px;height:38.90799999999979px;background:#dde7f8"></div>
<div class="a" style="left:194.3px;top:728.842px;width:50.29999999999998px;height:9.27699999999993px;background:#c9d9f1"></div>
<div class="a" style="left:194.3px;top:778.227px;width:50.29999999999998px;height:9.27699999999993px;background:#c9d9f1"></div>
<div class="a" style="left:194.3px;top:797.981px;width:50.29999999999998px;height:9.27699999999993px;background:#c9d9f1"></div>
<div class="a" style="left:194.3px;top:837.489px;width:50.29999999999998px;height:48.78499999999997px;background:#dde7f8"></div>
<div class="a" style="left:271px;top:679.457px;width:538px;height:38.908000000000015px;background:#f1f1f1"></div>
<div class="a" style="left:271px;top:896.7510000000001px;width:538px;height:48.784999999999854px;background:#f1f1f1"></div>
<div class="a" style="left:270.3px;top:443.609px;width:538.7px;height:8.877px;background:#f1f1f1"></div>
<div class="a" style="left:270.3px;top:442.00899999999996px;width:538.7px;height:1.6px;background:#1e1e1e"></div>
<div class="a" style="left:270.3px;top:451.109px;width:538.7px;height:2.3px;background:#000"></div>
<div class="a" style="left:270.3px;top:492.99399999999997px;width:538.7px;height:8.877px;background:#f1f1f1"></div>
<div class="a" style="left:270.3px;top:491.39399999999995px;width:538.7px;height:1.6px;background:#1e1e1e"></div>
<div class="a" style="left:270.3px;top:500.49399999999997px;width:538.7px;height:2.3px;background:#000"></div>
<div class="a" style="left:270.3px;top:730.0419999999999px;width:538.7px;height:8.877px;background:#f1f1f1"></div>
<div class="a" style="left:270.3px;top:728.442px;width:538.7px;height:1.6px;background:#1e1e1e"></div>
<div class="a" style="left:270.3px;top:737.5419999999999px;width:538.7px;height:2.3px;background:#000"></div>
<div class="a" style="left:270.3px;top:779.4269999999999px;width:538.7px;height:8.877px;background:#f1f1f1"></div>
<div class="a" style="left:270.3px;top:777.827px;width:538.7px;height:1.6px;background:#1e1e1e"></div>
<div class="a" style="left:270.3px;top:786.9269999999999px;width:538.7px;height:2.3px;background:#000"></div>
<div class="a" style="left:270.3px;top:799.1809999999999px;width:538.7px;height:8.877px;background:#f1f1f1"></div>
<div class="a" style="left:270.3px;top:797.581px;width:538.7px;height:1.6px;background:#1e1e1e"></div>
<div class="a" style="left:270.3px;top:806.6809999999999px;width:538.7px;height:2.3px;background:#000"></div>
<div class="a" style="left:270.3px;top:957.213px;width:538.7px;height:8.877px;background:#f1f1f1"></div>
<div class="a" style="left:270.3px;top:955.613px;width:538.7px;height:1.6px;background:#1e1e1e"></div>
<div class="a" style="left:270.3px;top:964.713px;width:538.7px;height:2.3px;background:#000"></div>
<div class="a" style="left:194.3px;top:660.1030000000001px;width:50.5px;height:8.877px;background:#f1f1f1"></div>
<div class="a" style="left:194.3px;top:659.3030000000001px;width:50.5px;height:1.7px;background:#1a1a1a"></div>
<div class="a" style="left:194.3px;top:668.08px;width:50.5px;height:2.5px;background:#000"></div>
<div class="c b" style="left:55.6px;top:326.51px;font-size:6.35px;letter-spacing:-0.08px;color:#111">GDV</div>
<div class="c " style="left:55.6px;top:346.54px;font-size:6.5px;letter-spacing:-0.05px;color:#111">Sales Share</div>
<div class="c " style="left:55.6px;top:366.29px;font-size:6.5px;letter-spacing:-0.05px;color:#111"># Units</div>
<div class="c " style="left:61.8px;top:376.17px;font-size:6.5px;letter-spacing:-0.05px;color:#111">Apartments</div>
<div class="c " style="left:61.8px;top:386.04px;font-size:6.5px;letter-spacing:-0.05px;color:#111">Duplex</div>
<div class="c " style="left:61.8px;top:395.92px;font-size:6.5px;letter-spacing:-0.05px;color:#111">Retail</div>
<div class="c " style="left:55.6px;top:415.68px;font-size:6.5px;letter-spacing:-0.05px;color:#111">Contract Value</div>
<div class="c " style="left:58.5px;top:425.55px;font-size:6.5px;letter-spacing:-0.05px;color:#111">Sales Commissions</div>
<div class="c " style="left:55.6px;top:435.43px;font-size:6.5px;letter-spacing:-0.05px;color:#111">Cancellations and Refunds</div>
<div class="c b" style="left:55.6px;top:445.03px;font-size:6.35px;letter-spacing:-0.08px;color:#111">Net Value</div>
<div class="c " style="left:55.6px;top:465.06px;font-size:6.5px;letter-spacing:-0.05px;color:#111">Down Payment</div>
<div class="c " style="left:55.6px;top:474.94px;font-size:6.5px;letter-spacing:-0.05px;color:#111">Installments</div>
<div class="c b" style="left:55.6px;top:494.42px;font-size:6.35px;letter-spacing:-0.08px;color:#111">Total Collections</div>
<div class="c i" style="left:55.6px;top:524.24px;font-size:6.6px;letter-spacing:-0.05px;color:#111">Cumulative Contract Value</div>
<div class="c i" style="left:55.6px;top:534.12px;font-size:6.6px;letter-spacing:-0.05px;color:#111">Cumulative Collection</div>
<div class="c b" style="left:55.6px;top:603.07px;font-size:6.35px;letter-spacing:-0.08px;color:#111">Capital (Development) Costs:</div>
<div class="c " style="left:55.6px;top:613.22px;font-size:6.5px;letter-spacing:-0.05px;color:#111">Land Cost</div>
<div class="c " style="left:55.6px;top:623.09px;font-size:6.5px;letter-spacing:-0.05px;color:#111">Hard Cost</div>
<div class="c " style="left:55.6px;top:632.97px;font-size:6.5px;letter-spacing:-0.05px;color:#111">Soft Cost</div>
<div class="c " style="left:55.6px;top:642.85px;font-size:6.5px;letter-spacing:-0.05px;color:#111">Contingency</div>
<div class="c b" style="left:55.6px;top:662.33px;font-size:6.35px;letter-spacing:-0.08px;color:#111">TDC</div>
<div class="c " style="left:55.6px;top:682.35px;font-size:6.5px;letter-spacing:-0.05px;color:#111">Land Cost</div>
<div class="c " style="left:55.6px;top:692.23px;font-size:6.5px;letter-spacing:-0.05px;color:#111">Hard Cost</div>
<div class="c " style="left:55.6px;top:702.11px;font-size:6.5px;letter-spacing:-0.05px;color:#111">Soft Cost</div>
<div class="c " style="left:55.6px;top:711.99px;font-size:6.5px;letter-spacing:-0.05px;color:#111">Contingency</div>
<div class="c b" style="left:55.6px;top:731.47px;font-size:6.35px;letter-spacing:-0.08px;color:#111">TDC</div>
<div class="c i" style="left:55.6px;top:751.41px;font-size:6.6px;letter-spacing:-0.05px;color:#111">Cumulative Development Spend</div>
<div class="a" style="left:53.5px;top:0;width:139.5px;height:1024px;overflow:hidden">
<div class="c i" style="left:2.1px;top:760.97px;font-size:6.5px;letter-spacing:-0.05px">Cumulative Development Spend post Financing</div>
</div>
<div class="c b" style="left:55.6px;top:780.85px;font-size:6.35px;letter-spacing:-0.08px;color:#111">Cost to fund</div>
<div class="c b" style="left:55.6px;top:800.61px;font-size:6.35px;letter-spacing:-0.08px;color:#111">Proceeds to Payback Capital</div>
<div class="c " style="left:55.6px;top:840.39px;font-size:6.5px;letter-spacing:-0.05px;color:#111">Loan-to-Cost (LTC)</div>
<div class="c " style="left:55.6px;top:850.26px;font-size:6.5px;letter-spacing:-0.05px;color:#111">Interest Rate (annual)</div>
<div class="c " style="left:55.6px;top:860.14px;font-size:6.5px;letter-spacing:-0.05px;color:#111">Pre-Finance TDC</div>
<div class="c " style="left:55.6px;top:870.02px;font-size:6.5px;letter-spacing:-0.05px;color:#111">Equity Finance</div>
<div class="c " style="left:55.6px;top:879.89px;font-size:6.5px;letter-spacing:-0.05px;color:#111">Max Loan Finance</div>
<div class="c " style="left:55.6px;top:899.65px;font-size:6.5px;letter-spacing:-0.05px;color:#111">Pre-Finance cost</div>
<div class="c " style="left:55.6px;top:909.53px;font-size:6.5px;letter-spacing:-0.05px;color:#111">Loan opening balance</div>
<div class="c " style="left:55.6px;top:919.40px;font-size:6.5px;letter-spacing:-0.05px;color:#111">Loan draw</div>
<div class="c " style="left:55.6px;top:929.28px;font-size:6.5px;letter-spacing:-0.05px;color:#111">Interest</div>
<div class="c " style="left:55.6px;top:939.16px;font-size:6.5px;letter-spacing:-0.05px;color:#111">Repayment</div>
<div class="c b" style="left:55.6px;top:958.64px;font-size:6.35px;letter-spacing:-0.08px;color:#111">Loan Balance</div>
<div class="c i" style="left:55.6px;top:978.58px;font-size:6.6px;letter-spacing:0px;color:#4472c4">Max Loan limit</div>
<div class="c r " style="right:569.40px;top:327.27px;font-size:6.4px;letter-spacing:0px;color:#111">2,850,000,000</div>
<div class="c r " style="right:569.40px;top:366.78px;font-size:6.4px;letter-spacing:0px;color:#111">1,000</div>
<div class="c r " style="right:569.40px;top:376.65px;font-size:6.4px;letter-spacing:0px;color:#111">400</div>
<div class="c r " style="right:569.40px;top:386.53px;font-size:6.4px;letter-spacing:0px;color:#111">300</div>
<div class="c r " style="right:569.40px;top:396.41px;font-size:6.4px;letter-spacing:0px;color:#111">300</div>
<div class="c r " style="right:569.40px;top:416.16px;font-size:6.4px;letter-spacing:0px;color:#111">2,850,000,000</div>
<div class="c r " style="right:569.40px;top:445.79px;font-size:6.4px;letter-spacing:0px;color:#111">2,793,000,000</div>
<div class="c r " style="right:569.40px;top:465.55px;font-size:6.4px;letter-spacing:0px;color:#111">558,600,000</div>
<div class="c r " style="right:569.40px;top:475.42px;font-size:6.4px;letter-spacing:0px;color:#111">2,234,400,000</div>
<div class="c r " style="right:569.40px;top:495.18px;font-size:6.4px;letter-spacing:0px;color:#111">2,793,000,000</div>
<div class="c r " style="right:569.40px;top:613.70px;font-size:6.4px;letter-spacing:0px;color:#111">80,000,000</div>
<div class="c r " style="right:569.40px;top:623.58px;font-size:6.4px;letter-spacing:0px;color:#111">840,000,000</div>
<div class="c r " style="right:569.40px;top:633.45px;font-size:6.4px;letter-spacing:0px;color:#111">84,000,000</div>
<div class="c r " style="right:569.40px;top:643.33px;font-size:6.4px;letter-spacing:0px;color:#111">64,680,000</div>
<div class="c r " style="right:569.40px;top:732.22px;font-size:6.4px;letter-spacing:0px;color:#111">1,068,680,000</div>
<div class="c r " style="right:569.40px;top:781.61px;font-size:6.4px;letter-spacing:0px;color:#111">897,926,667</div>
<div class="c r " style="right:569.40px;top:801.36px;font-size:6.4px;letter-spacing:0px;color:#111">2,622,246,667</div>
<div class="c r " style="right:569.40px;top:860.63px;font-size:6.4px;letter-spacing:0px;color:#111">897,926,667</div>
<div class="c r " style="right:569.40px;top:870.50px;font-size:6.4px;letter-spacing:0px;color:#111">359,170,667</div>
<div class="c r " style="right:569.40px;top:880.38px;font-size:6.4px;letter-spacing:0px;color:#111">538,756,000</div>
<div class="c r " style="right:567.00px;top:347.02px;font-size:6.4px;letter-spacing:0px;color:#111">100%</div>
<div class="c r " style="right:567.00px;top:840.87px;font-size:6.4px;letter-spacing:0px;color:#111">60%</div>
<div class="c r " style="right:567.00px;top:850.75px;font-size:6.4px;letter-spacing:0px;color:#111">12%</div>
<div class="c r " style="right:567.00px;top:426.04px;font-size:6.4px;letter-spacing:0px;color:#111">(28,500,000)</div>
<div class="c r " style="right:567.00px;top:435.91px;font-size:6.4px;letter-spacing:0px;color:#111">(28,500,000)</div>
<div class="c r b" style="right:569.75px;top:661.17px;font-size:6.3px;letter-spacing:-0.05px;color:#111">1,068,680,000</div>
<div class="c r " style="right:476.40px;top:347.02px;font-size:6.4px;letter-spacing:0px;color:#7b9ad6">-</div>
<div class="c r " style="right:350.20px;top:347.02px;font-size:6.4px;letter-spacing:0px;color:#7b9ad6">-</div>
<div class="c r " style="right:296.30px;top:347.02px;font-size:6.4px;letter-spacing:0px;color:#7b9ad6">-</div>
<div class="c r " style="right:237.00px;top:347.02px;font-size:6.4px;letter-spacing:0px;color:#7b9ad6">-</div>
<div class="c r " style="right:182.50px;top:347.02px;font-size:6.4px;letter-spacing:0px;color:#7b9ad6">-</div>
<div class="c r " style="right:128.20px;top:347.02px;font-size:6.4px;letter-spacing:0px;color:#7b9ad6">-</div>
<div class="c r " style="right:73.70px;top:347.02px;font-size:6.4px;letter-spacing:0px;color:#7b9ad6">-</div>
<div class="c r " style="right:19.30px;top:347.02px;font-size:6.4px;letter-spacing:0px;color:#7b9ad6">-</div>
<div class="c r " style="right:476.40px;top:366.78px;font-size:6.4px;letter-spacing:0px;color:#7b9ad6">-</div>
<div class="c r " style="right:350.20px;top:366.78px;font-size:6.4px;letter-spacing:0px;color:#7b9ad6">-</div>
<div class="c r " style="right:296.30px;top:366.78px;font-size:6.4px;letter-spacing:0px;color:#7b9ad6">-</div>
<div class="c r " style="right:237.00px;top:366.78px;font-size:6.4px;letter-spacing:0px;color:#7b9ad6">-</div>
<div class="c r " style="right:182.50px;top:366.78px;font-size:6.4px;letter-spacing:0px;color:#7b9ad6">-</div>
<div class="c r " style="right:128.20px;top:366.78px;font-size:6.4px;letter-spacing:0px;color:#7b9ad6">-</div>
<div class="c r " style="right:73.70px;top:366.78px;font-size:6.4px;letter-spacing:0px;color:#7b9ad6">-</div>
<div class="c r " style="right:19.30px;top:366.78px;font-size:6.4px;letter-spacing:0px;color:#7b9ad6">-</div>
<div class="c r " style="right:476.40px;top:376.65px;font-size:6.4px;letter-spacing:0px;color:#7b9ad6">-</div>
<div class="c r " style="right:350.20px;top:376.65px;font-size:6.4px;letter-spacing:0px;color:#7b9ad6">-</div>
<div class="c r " style="right:296.30px;top:376.65px;font-size:6.4px;letter-spacing:0px;color:#7b9ad6">-</div>
<div class="c r " style="right:237.00px;top:376.65px;font-size:6.4px;letter-spacing:0px;color:#7b9ad6">-</div>
<div class="c r " style="right:182.50px;top:376.65px;font-size:6.4px;letter-spacing:0px;color:#7b9ad6">-</div>
<div class="c r " style="right:128.20px;top:376.65px;font-size:6.4px;letter-spacing:0px;color:#7b9ad6">-</div>
<div class="c r " style="right:73.70px;top:376.65px;font-size:6.4px;letter-spacing:0px;color:#7b9ad6">-</div>
<div class="c r " style="right:19.30px;top:376.65px;font-size:6.4px;letter-spacing:0px;color:#7b9ad6">-</div>
<div class="c r " style="right:476.40px;top:386.53px;font-size:6.4px;letter-spacing:0px;color:#7b9ad6">-</div>
<div class="c r " style="right:350.20px;top:386.53px;font-size:6.4px;letter-spacing:0px;color:#7b9ad6">-</div>
<div class="c r " style="right:296.30px;top:386.53px;font-size:6.4px;letter-spacing:0px;color:#7b9ad6">-</div>
<div class="c r " style="right:237.00px;top:386.53px;font-size:6.4px;letter-spacing:0px;color:#7b9ad6">-</div>
<div class="c r " style="right:182.50px;top:386.53px;font-size:6.4px;letter-spacing:0px;color:#7b9ad6">-</div>
<div class="c r " style="right:128.20px;top:386.53px;font-size:6.4px;letter-spacing:0px;color:#7b9ad6">-</div>
<div class="c r " style="right:73.70px;top:386.53px;font-size:6.4px;letter-spacing:0px;color:#7b9ad6">-</div>
<div class="c r " style="right:19.30px;top:386.53px;font-size:6.4px;letter-spacing:0px;color:#7b9ad6">-</div>
<div class="c r " style="right:476.40px;top:396.41px;font-size:6.4px;letter-spacing:0px;color:#7b9ad6">-</div>
<div class="c r " style="right:350.20px;top:396.41px;font-size:6.4px;letter-spacing:0px;color:#7b9ad6">-</div>
<div class="c r " style="right:296.30px;top:396.41px;font-size:6.4px;letter-spacing:0px;color:#7b9ad6">-</div>
<div class="c r " style="right:237.00px;top:396.41px;font-size:6.4px;letter-spacing:0px;color:#7b9ad6">-</div>
<div class="c r " style="right:182.50px;top:396.41px;font-size:6.4px;letter-spacing:0px;color:#7b9ad6">-</div>
<div class="c r " style="right:128.20px;top:396.41px;font-size:6.4px;letter-spacing:0px;color:#7b9ad6">-</div>
<div class="c r " style="right:73.70px;top:396.41px;font-size:6.4px;letter-spacing:0px;color:#7b9ad6">-</div>
<div class="c r " style="right:19.30px;top:396.41px;font-size:6.4px;letter-spacing:0px;color:#7b9ad6">-</div>
<div class="c r " style="right:476.40px;top:406.28px;font-size:6.4px;letter-spacing:0px;color:#7b9ad6">-</div>
<div class="c r " style="right:350.20px;top:406.28px;font-size:6.4px;letter-spacing:0px;color:#7b9ad6">-</div>
<div class="c r " style="right:296.30px;top:406.28px;font-size:6.4px;letter-spacing:0px;color:#7b9ad6">-</div>
<div class="c r " style="right:237.00px;top:406.28px;font-size:6.4px;letter-spacing:0px;color:#7b9ad6">-</div>
<div class="c r " style="right:182.50px;top:406.28px;font-size:6.4px;letter-spacing:0px;color:#7b9ad6">-</div>
<div class="c r " style="right:128.20px;top:406.28px;font-size:6.4px;letter-spacing:0px;color:#7b9ad6">-</div>
<div class="c r " style="right:73.70px;top:406.28px;font-size:6.4px;letter-spacing:0px;color:#7b9ad6">-</div>
<div class="c r " style="right:19.30px;top:406.28px;font-size:6.4px;letter-spacing:0px;color:#7b9ad6">-</div>
<div class="c r " style="right:476.40px;top:416.16px;font-size:6.4px;letter-spacing:0px;color:#7b9ad6">-</div>
<div class="c r " style="right:350.20px;top:416.16px;font-size:6.4px;letter-spacing:0px;color:#7b9ad6">-</div>
<div class="c r " style="right:296.30px;top:416.16px;font-size:6.4px;letter-spacing:0px;color:#7b9ad6">-</div>
<div class="c r " style="right:237.00px;top:416.16px;font-size:6.4px;letter-spacing:0px;color:#7b9ad6">-</div>
<div class="c r " style="right:182.50px;top:416.16px;font-size:6.4px;letter-spacing:0px;color:#7b9ad6">-</div>
<div class="c r " style="right:128.20px;top:416.16px;font-size:6.4px;letter-spacing:0px;color:#7b9ad6">-</div>
<div class="c r " style="right:73.70px;top:416.16px;font-size:6.4px;letter-spacing:0px;color:#7b9ad6">-</div>
<div class="c r " style="right:19.30px;top:416.16px;font-size:6.4px;letter-spacing:0px;color:#7b9ad6">-</div>
<div class="c r " style="right:476.40px;top:435.91px;font-size:6.4px;letter-spacing:0px;color:#7b9ad6">-</div>
<div class="c r " style="right:350.20px;top:435.91px;font-size:6.4px;letter-spacing:0px;color:#7b9ad6">-</div>
<div class="c r " style="right:296.30px;top:435.91px;font-size:6.4px;letter-spacing:0px;color:#7b9ad6">-</div>
<div class="c r " style="right:237.00px;top:435.91px;font-size:6.4px;letter-spacing:0px;color:#7b9ad6">-</div>
<div class="c r " style="right:182.50px;top:435.91px;font-size:6.4px;letter-spacing:0px;color:#7b9ad6">-</div>
<div class="c r " style="right:128.20px;top:435.91px;font-size:6.4px;letter-spacing:0px;color:#7b9ad6">-</div>
<div class="c r " style="right:73.70px;top:435.91px;font-size:6.4px;letter-spacing:0px;color:#7b9ad6">-</div>
<div class="c r " style="right:19.30px;top:435.91px;font-size:6.4px;letter-spacing:0px;color:#7b9ad6">-</div>
<div class="c r " style="right:476.40px;top:465.55px;font-size:6.4px;letter-spacing:0px;color:#7b9ad6">-</div>
<div class="c r " style="right:350.20px;top:465.55px;font-size:6.4px;letter-spacing:0px;color:#7b9ad6">-</div>
<div class="c r " style="right:296.30px;top:465.55px;font-size:6.4px;letter-spacing:0px;color:#7b9ad6">-</div>
<div class="c r " style="right:237.00px;top:465.55px;font-size:6.4px;letter-spacing:0px;color:#7b9ad6">-</div>
<div class="c r " style="right:182.50px;top:465.55px;font-size:6.4px;letter-spacing:0px;color:#7b9ad6">-</div>
<div class="c r " style="right:128.20px;top:465.55px;font-size:6.4px;letter-spacing:0px;color:#7b9ad6">-</div>
<div class="c r " style="right:73.70px;top:465.55px;font-size:6.4px;letter-spacing:0px;color:#7b9ad6">-</div>
<div class="c r " style="right:19.30px;top:465.55px;font-size:6.4px;letter-spacing:0px;color:#7b9ad6">-</div>
<div class="c r " style="right:476.40px;top:475.42px;font-size:6.4px;letter-spacing:0px;color:#7b9ad6">-</div>
<div class="c r " style="right:350.20px;top:475.42px;font-size:6.4px;letter-spacing:0px;color:#7b9ad6">-</div>
<div class="c r " style="right:296.30px;top:475.42px;font-size:6.4px;letter-spacing:0px;color:#7b9ad6">-</div>
<div class="c r " style="right:237.00px;top:475.42px;font-size:6.4px;letter-spacing:0px;color:#7b9ad6">-</div>
<div class="c r " style="right:182.50px;top:475.42px;font-size:6.4px;letter-spacing:0px;color:#7b9ad6">-</div>
<div class="c r " style="right:128.20px;top:475.42px;font-size:6.4px;letter-spacing:0px;color:#7b9ad6">-</div>
<div class="c r " style="right:73.70px;top:475.42px;font-size:6.4px;letter-spacing:0px;color:#7b9ad6">-</div>
<div class="c r " style="right:19.30px;top:475.42px;font-size:6.4px;letter-spacing:0px;color:#7b9ad6">-</div>
<div class="c r b" style="right:476.40px;top:445.79px;font-size:6.4px;letter-spacing:0px;color:#111">-</div>
<div class="c r b" style="right:350.20px;top:445.79px;font-size:6.4px;letter-spacing:0px;color:#111">-</div>
<div class="c r b" style="right:296.30px;top:445.79px;font-size:6.4px;letter-spacing:0px;color:#111">-</div>
<div class="c r b" style="right:237.00px;top:445.79px;font-size:6.4px;letter-spacing:0px;color:#111">-</div>
<div class="c r b" style="right:182.50px;top:445.79px;font-size:6.4px;letter-spacing:0px;color:#111">-</div>
<div class="c r b" style="right:128.20px;top:445.79px;font-size:6.4px;letter-spacing:0px;color:#111">-</div>
<div class="c r b" style="right:73.70px;top:445.79px;font-size:6.4px;letter-spacing:0px;color:#111">-</div>
<div class="c r b" style="right:19.30px;top:445.79px;font-size:6.4px;letter-spacing:0px;color:#111">-</div>
<div class="c r b" style="right:476.40px;top:495.18px;font-size:6.4px;letter-spacing:0px;color:#111">-</div>
<div class="c r b" style="right:350.20px;top:495.18px;font-size:6.4px;letter-spacing:0px;color:#111">-</div>
<div class="c r b" style="right:296.30px;top:495.18px;font-size:6.4px;letter-spacing:0px;color:#111">-</div>
<div class="c r b" style="right:237.00px;top:495.18px;font-size:6.4px;letter-spacing:0px;color:#111">-</div>
<div class="c r b" style="right:182.50px;top:495.18px;font-size:6.4px;letter-spacing:0px;color:#111">-</div>
<div class="c r b" style="right:128.20px;top:495.18px;font-size:6.4px;letter-spacing:0px;color:#111">-</div>
<div class="c r b" style="right:73.70px;top:495.18px;font-size:6.4px;letter-spacing:0px;color:#111">-</div>
<div class="c r b" style="right:19.30px;top:495.18px;font-size:6.4px;letter-spacing:0px;color:#111">-</div>
<div class="c r b" style="right:476.40px;top:801.36px;font-size:6.4px;letter-spacing:0px;color:#111">-</div>
<div class="c r b" style="right:350.20px;top:801.36px;font-size:6.4px;letter-spacing:0px;color:#111">-</div>
<div class="c r b" style="right:296.30px;top:801.36px;font-size:6.4px;letter-spacing:0px;color:#111">-</div>
<div class="c r b" style="right:237.00px;top:801.36px;font-size:6.4px;letter-spacing:0px;color:#111">-</div>
<div class="c r b" style="right:182.50px;top:801.36px;font-size:6.4px;letter-spacing:0px;color:#111">-</div>
<div class="c r b" style="right:128.20px;top:801.36px;font-size:6.4px;letter-spacing:0px;color:#111">-</div>
<div class="c r b" style="right:73.70px;top:801.36px;font-size:6.4px;letter-spacing:0px;color:#111">-</div>
<div class="c r b" style="right:19.30px;top:801.36px;font-size:6.4px;letter-spacing:0px;color:#111">-</div>
<div class="c r i" style="right:485.70px;top:524.81px;font-size:6.4px;letter-spacing:0px;color:#666">-</div>
<div class="c r i" style="right:359.50px;top:524.81px;font-size:6.4px;letter-spacing:0px;color:#666">-</div>
<div class="c r i" style="right:305.60px;top:524.81px;font-size:6.4px;letter-spacing:0px;color:#666">-</div>
<div class="c r i" style="right:246.30px;top:524.81px;font-size:6.4px;letter-spacing:0px;color:#666">-</div>
<div class="c r i" style="right:191.80px;top:524.81px;font-size:6.4px;letter-spacing:0px;color:#666">-</div>
<div class="c r i" style="right:137.50px;top:524.81px;font-size:6.4px;letter-spacing:0px;color:#666">-</div>
<div class="c r i" style="right:83.00px;top:524.81px;font-size:6.4px;letter-spacing:0px;color:#666">-</div>
<div class="c r i" style="right:28.60px;top:524.81px;font-size:6.4px;letter-spacing:0px;color:#666">-</div>
<div class="c r i" style="right:485.70px;top:534.68px;font-size:6.4px;letter-spacing:0px;color:#666">-</div>
<div class="c r i" style="right:359.50px;top:534.68px;font-size:6.4px;letter-spacing:0px;color:#666">-</div>
<div class="c r i" style="right:305.60px;top:534.68px;font-size:6.4px;letter-spacing:0px;color:#666">-</div>
<div class="c r i" style="right:246.30px;top:534.68px;font-size:6.4px;letter-spacing:0px;color:#666">-</div>
<div class="c r i" style="right:191.80px;top:534.68px;font-size:6.4px;letter-spacing:0px;color:#666">-</div>
<div class="c r i" style="right:137.50px;top:534.68px;font-size:6.4px;letter-spacing:0px;color:#666">-</div>
<div class="c r i" style="right:83.00px;top:534.68px;font-size:6.4px;letter-spacing:0px;color:#666">-</div>
<div class="c r i" style="right:28.60px;top:534.68px;font-size:6.4px;letter-spacing:0px;color:#666">-</div>
<div class="c r " style="right:477.00px;top:682.84px;font-size:6.4px;letter-spacing:0px;color:#111">26,666,667</div>
<div class="c r " style="right:350.80px;top:682.84px;font-size:6.4px;letter-spacing:0px;color:#111">26,666,667</div>
<div class="c r " style="right:296.90px;top:682.84px;font-size:6.4px;letter-spacing:0px;color:#111">26,666,667</div>
<div class="c r " style="right:477.00px;top:692.72px;font-size:6.4px;letter-spacing:0px;color:#111">33,600,000</div>
<div class="c r " style="right:350.80px;top:692.72px;font-size:6.4px;letter-spacing:0px;color:#111">50,400,000</div>
<div class="c r " style="right:296.90px;top:692.72px;font-size:6.4px;letter-spacing:0px;color:#111">67,200,000</div>
<div class="c r " style="right:237.60px;top:692.72px;font-size:6.4px;letter-spacing:0px;color:#111">84,000,000</div>
<div class="c r " style="right:183.10px;top:692.72px;font-size:6.4px;letter-spacing:0px;color:#111">100,800,000</div>
<div class="c r " style="right:128.80px;top:692.72px;font-size:6.4px;letter-spacing:0px;color:#111">100,800,000</div>
<div class="c r " style="right:74.30px;top:692.72px;font-size:6.4px;letter-spacing:0px;color:#111">84,000,000</div>
<div class="c r " style="right:19.90px;top:692.72px;font-size:6.4px;letter-spacing:0px;color:#111">67,200,000</div>
<div class="c r " style="right:477.00px;top:702.59px;font-size:6.4px;letter-spacing:0px;color:#111">3,500,000</div>
<div class="c r " style="right:350.80px;top:702.59px;font-size:6.4px;letter-spacing:0px;color:#111">3,500,000</div>
<div class="c r " style="right:296.90px;top:702.59px;font-size:6.4px;letter-spacing:0px;color:#111">3,500,000</div>
<div class="c r " style="right:237.60px;top:702.59px;font-size:6.4px;letter-spacing:0px;color:#111">3,500,000</div>
<div class="c r " style="right:183.10px;top:702.59px;font-size:6.4px;letter-spacing:0px;color:#111">3,500,000</div>
<div class="c r " style="right:128.80px;top:702.59px;font-size:6.4px;letter-spacing:0px;color:#111">3,500,000</div>
<div class="c r " style="right:74.30px;top:702.59px;font-size:6.4px;letter-spacing:0px;color:#111">3,500,000</div>
<div class="c r " style="right:19.90px;top:702.59px;font-size:6.4px;letter-spacing:0px;color:#111">3,500,000</div>
<div class="c r " style="right:477.00px;top:712.47px;font-size:6.4px;letter-spacing:0px;color:#111">2,695,000</div>
<div class="c r " style="right:350.80px;top:712.47px;font-size:6.4px;letter-spacing:0px;color:#111">2,695,000</div>
<div class="c r " style="right:296.90px;top:712.47px;font-size:6.4px;letter-spacing:0px;color:#111">2,695,000</div>
<div class="c r " style="right:237.60px;top:712.47px;font-size:6.4px;letter-spacing:0px;color:#111">2,695,000</div>
<div class="c r " style="right:183.10px;top:712.47px;font-size:6.4px;letter-spacing:0px;color:#111">2,695,000</div>
<div class="c r " style="right:128.80px;top:712.47px;font-size:6.4px;letter-spacing:0px;color:#111">2,695,000</div>
<div class="c r " style="right:74.30px;top:712.47px;font-size:6.4px;letter-spacing:0px;color:#111">2,695,000</div>
<div class="c r " style="right:19.90px;top:712.47px;font-size:6.4px;letter-spacing:0px;color:#111">2,695,000</div>
<div class="c r b" style="right:478.00px;top:731.36px;font-size:6.6px;letter-spacing:0px;color:#111">66,461,667</div>
<div class="c r b" style="right:351.80px;top:731.36px;font-size:6.6px;letter-spacing:0px;color:#111">83,261,667</div>
<div class="c r b" style="right:297.90px;top:731.36px;font-size:6.6px;letter-spacing:0px;color:#111">100,061,667</div>
<div class="c r b" style="right:238.60px;top:731.36px;font-size:6.6px;letter-spacing:0px;color:#111">90,195,000</div>
<div class="c r b" style="right:184.10px;top:731.36px;font-size:6.6px;letter-spacing:0px;color:#111">106,995,000</div>
<div class="c r b" style="right:129.80px;top:731.36px;font-size:6.6px;letter-spacing:0px;color:#111">106,995,000</div>
<div class="c r b" style="right:75.30px;top:731.36px;font-size:6.6px;letter-spacing:0px;color:#111">90,195,000</div>
<div class="c r b" style="right:20.90px;top:731.36px;font-size:6.6px;letter-spacing:0px;color:#111">73,395,000</div>
<div class="c r i" style="right:477.40px;top:751.81px;font-size:6.6px;letter-spacing:-0.1px;color:#111">66,461,667</div>
<div class="c r i" style="right:351.20px;top:751.81px;font-size:6.6px;letter-spacing:-0.1px;color:#111">149,723,333</div>
<div class="c r i" style="right:297.30px;top:751.81px;font-size:6.6px;letter-spacing:-0.1px;color:#111">249,785,000</div>
<div class="c r i" style="right:238.00px;top:751.81px;font-size:6.6px;letter-spacing:-0.1px;color:#111">339,980,000</div>
<div class="c r i" style="right:183.50px;top:751.81px;font-size:6.6px;letter-spacing:-0.1px;color:#111">446,975,000</div>
<div class="c r i" style="right:129.20px;top:751.81px;font-size:6.6px;letter-spacing:-0.1px;color:#111">553,970,000</div>
<div class="c r i" style="right:74.70px;top:751.81px;font-size:6.6px;letter-spacing:-0.1px;color:#111">644,165,000</div>
<div class="c r i" style="right:20.30px;top:751.81px;font-size:6.6px;letter-spacing:-0.1px;color:#111">717,560,000</div>
<div class="c r i" style="right:477.40px;top:761.69px;font-size:6.6px;letter-spacing:-0.1px;color:#111">66,860,437</div>
<div class="c r i" style="right:351.20px;top:761.69px;font-size:6.6px;letter-spacing:-0.1px;color:#111">151,024,431</div>
<div class="c r i" style="right:297.30px;top:761.69px;font-size:6.6px;letter-spacing:-0.1px;color:#111">252,597,819</div>
<div class="c r i" style="right:238.00px;top:761.69px;font-size:6.6px;letter-spacing:-0.1px;color:#111">344,860,827</div>
<div class="c r i" style="right:183.50px;top:761.69px;font-size:6.6px;letter-spacing:-0.1px;color:#111">454,586,485</div>
<div class="c r i" style="right:129.20px;top:761.69px;font-size:6.6px;letter-spacing:-0.1px;color:#111">564,981,420</div>
<div class="c r i" style="right:74.70px;top:761.69px;font-size:6.6px;letter-spacing:-0.1px;color:#111">659,151,524</div>
<div class="c r i" style="right:20.30px;top:761.69px;font-size:6.6px;letter-spacing:-0.1px;color:#111">737,001,749</div>
<div class="c r b" style="right:478.00px;top:780.74px;font-size:6.6px;letter-spacing:0px;color:#111">66,461,667</div>
<div class="c r b" style="right:351.80px;top:780.74px;font-size:6.6px;letter-spacing:0px;color:#111">83,261,667</div>
<div class="c r b" style="right:297.90px;top:780.74px;font-size:6.6px;letter-spacing:0px;color:#111">100,061,667</div>
<div class="c r b" style="right:238.60px;top:780.74px;font-size:6.6px;letter-spacing:0px;color:#111">90,195,000</div>
<div class="c r b" style="right:184.10px;top:780.74px;font-size:6.6px;letter-spacing:0px;color:#111">106,995,000</div>
<div class="c r b" style="right:129.80px;top:780.74px;font-size:6.6px;letter-spacing:0px;color:#111">106,995,000</div>
<div class="c r b" style="right:75.30px;top:780.74px;font-size:6.6px;letter-spacing:0px;color:#111">90,195,000</div>
<div class="c r b" style="right:20.90px;top:780.74px;font-size:6.6px;letter-spacing:0px;color:#111">73,395,000</div>
<div class="c r " style="right:477.00px;top:900.13px;font-size:6.4px;letter-spacing:0px;color:#111">66,461,667</div>
<div class="c r " style="right:350.80px;top:900.13px;font-size:6.4px;letter-spacing:0px;color:#111">83,261,667</div>
<div class="c r " style="right:296.90px;top:900.13px;font-size:6.4px;letter-spacing:0px;color:#111">100,061,667</div>
<div class="c r " style="right:237.60px;top:900.13px;font-size:6.4px;letter-spacing:0px;color:#111">90,195,000</div>
<div class="c r " style="right:183.10px;top:900.13px;font-size:6.4px;letter-spacing:0px;color:#111">106,995,000</div>
<div class="c r " style="right:128.80px;top:900.13px;font-size:6.4px;letter-spacing:0px;color:#111">106,995,000</div>
<div class="c r " style="right:74.30px;top:900.13px;font-size:6.4px;letter-spacing:0px;color:#111">90,195,000</div>
<div class="c r " style="right:19.90px;top:900.13px;font-size:6.4px;letter-spacing:0px;color:#111">73,395,000</div>
<div class="c r " style="right:477.00px;top:910.01px;font-size:6.4px;letter-spacing:0px;color:#333">-</div>
<div class="c r " style="right:350.80px;top:910.01px;font-size:6.4px;letter-spacing:0px;color:#111">40,275,770</div>
<div class="c r " style="right:296.90px;top:910.01px;font-size:6.4px;letter-spacing:0px;color:#111">91,135,098</div>
<div class="c r " style="right:237.60px;top:910.01px;font-size:6.4px;letter-spacing:0px;color:#111">152,683,819</div>
<div class="c r " style="right:183.10px;top:910.01px;font-size:6.4px;letter-spacing:0px;color:#111">208,868,827</div>
<div class="c r " style="right:128.80px;top:910.01px;font-size:6.4px;letter-spacing:0px;color:#111">275,796,485</div>
<div class="c r " style="right:74.30px;top:910.01px;font-size:6.4px;letter-spacing:0px;color:#111">343,393,420</div>
<div class="c r " style="right:19.90px;top:910.01px;font-size:6.4px;letter-spacing:0px;color:#111">401,485,524</div>
<div class="c r " style="right:477.00px;top:919.89px;font-size:6.4px;letter-spacing:0px;color:#111">39,877,000</div>
<div class="c r " style="right:350.80px;top:919.89px;font-size:6.4px;letter-spacing:0px;color:#111">49,957,000</div>
<div class="c r " style="right:296.90px;top:919.89px;font-size:6.4px;letter-spacing:0px;color:#111">60,037,000</div>
<div class="c r " style="right:237.60px;top:919.89px;font-size:6.4px;letter-spacing:0px;color:#111">54,117,000</div>
<div class="c r " style="right:183.10px;top:919.89px;font-size:6.4px;letter-spacing:0px;color:#111">64,197,000</div>
<div class="c r " style="right:128.80px;top:919.89px;font-size:6.4px;letter-spacing:0px;color:#111">64,197,000</div>
<div class="c r " style="right:74.30px;top:919.89px;font-size:6.4px;letter-spacing:0px;color:#111">54,117,000</div>
<div class="c r " style="right:19.90px;top:919.89px;font-size:6.4px;letter-spacing:0px;color:#111">44,037,000</div>
<div class="c r " style="right:477.00px;top:929.76px;font-size:6.4px;letter-spacing:0px;color:#111">398,770</div>
<div class="c r " style="right:350.80px;top:929.76px;font-size:6.4px;letter-spacing:0px;color:#111">902,328</div>
<div class="c r " style="right:296.90px;top:929.76px;font-size:6.4px;letter-spacing:0px;color:#111">1,511,721</div>
<div class="c r " style="right:237.60px;top:929.76px;font-size:6.4px;letter-spacing:0px;color:#111">2,068,008</div>
<div class="c r " style="right:183.10px;top:929.76px;font-size:6.4px;letter-spacing:0px;color:#111">2,730,658</div>
<div class="c r " style="right:128.80px;top:929.76px;font-size:6.4px;letter-spacing:0px;color:#111">3,399,935</div>
<div class="c r " style="right:74.30px;top:929.76px;font-size:6.4px;letter-spacing:0px;color:#111">3,975,104</div>
<div class="c r " style="right:19.90px;top:929.76px;font-size:6.4px;letter-spacing:0px;color:#111">4,455,225</div>
<div class="c r " style="right:477.00px;top:939.64px;font-size:6.4px;letter-spacing:0px;color:#333">-</div>
<div class="c r " style="right:350.80px;top:939.64px;font-size:6.4px;letter-spacing:0px;color:#333">-</div>
<div class="c r " style="right:296.90px;top:939.64px;font-size:6.4px;letter-spacing:0px;color:#333">-</div>
<div class="c r " style="right:237.60px;top:939.64px;font-size:6.4px;letter-spacing:0px;color:#333">-</div>
<div class="c r " style="right:183.10px;top:939.64px;font-size:6.4px;letter-spacing:0px;color:#333">-</div>
<div class="c r " style="right:128.80px;top:939.64px;font-size:6.4px;letter-spacing:0px;color:#333">-</div>
<div class="c r " style="right:74.30px;top:939.64px;font-size:6.4px;letter-spacing:0px;color:#333">-</div>
<div class="c r " style="right:19.90px;top:939.64px;font-size:6.4px;letter-spacing:0px;color:#333">-</div>
<div class="c r b" style="right:478.00px;top:958.53px;font-size:6.6px;letter-spacing:0px;color:#111">40,275,770</div>
<div class="c r b" style="right:351.80px;top:958.53px;font-size:6.6px;letter-spacing:0px;color:#111">91,135,098</div>
<div class="c r b" style="right:297.90px;top:958.53px;font-size:6.6px;letter-spacing:0px;color:#111">152,683,819</div>
<div class="c r b" style="right:238.60px;top:958.53px;font-size:6.6px;letter-spacing:0px;color:#111">208,868,827</div>
<div class="c r b" style="right:184.10px;top:958.53px;font-size:6.6px;letter-spacing:0px;color:#111">275,796,485</div>
<div class="c r b" style="right:129.80px;top:958.53px;font-size:6.6px;letter-spacing:0px;color:#111">343,393,420</div>
<div class="c r b" style="right:75.30px;top:958.53px;font-size:6.6px;letter-spacing:0px;color:#111">401,485,524</div>
<div class="c r b" style="right:20.90px;top:958.53px;font-size:6.6px;letter-spacing:0px;color:#111">449,977,749</div>
<div class="c r i" style="right:-34.10px;top:751.81px;font-size:6.6px;letter-spacing:-0.1px;color:#111">787,154,000</div>
<div class="c r i" style="right:-34.10px;top:761.69px;font-size:6.6px;letter-spacing:-0.1px;color:#111">787,154,000</div>
<div class="c r " style="right:-34.50px;top:910.01px;font-size:6.4px;letter-spacing:0px;color:#111">449,977,749</div>
<div class="c r b" style="right:-33.50px;top:958.53px;font-size:6.6px;letter-spacing:0px;color:#111">449,977,749</div>
<div class="c r i" style="right:477.30px;top:979.05px;font-size:6.4px;letter-spacing:0px;color:#4472c4">60%</div>
<div class="c r i" style="right:351.10px;top:979.05px;font-size:6.4px;letter-spacing:0px;color:#4472c4">60%</div>
<div class="c r i" style="right:297.20px;top:979.05px;font-size:6.4px;letter-spacing:0px;color:#4472c4">60%</div>
<div class="c r i" style="right:237.90px;top:979.05px;font-size:6.4px;letter-spacing:0px;color:#4472c4">60%</div>
<div class="c r i" style="right:183.40px;top:979.05px;font-size:6.4px;letter-spacing:0px;color:#4472c4">60%</div>
<div class="c r i" style="right:129.10px;top:979.05px;font-size:6.4px;letter-spacing:0px;color:#4472c4">60%</div>
<div class="c r i" style="right:74.60px;top:979.05px;font-size:6.4px;letter-spacing:0px;color:#4472c4">60%</div>
<div class="c r i" style="right:20.20px;top:979.05px;font-size:6.4px;letter-spacing:0px;color:#4472c4">60%</div>
<div class="a" style="left:191.6px;top:965.2900000000001px;width:54px;height:12.3px;border:2px solid #2f7a4b"></div>
<div class="a" style="left:239.6px;top:971.6px;width:8.6px;height:9px;background:#fff"></div>
<div class="a" style="left:240.8px;top:973px;width:6.2px;height:6.5px;background:#2f7a4b"></div>
<div class="a" style="left:0;top:989.2px;width:809px;height:35px;background:#efefef;border-top:1px solid #cfcfcf"></div>
<svg class="a" style="left:17px;top:999px" width="40" height="14" viewBox="0 0 40 14" fill="#b5b5b5"><path d="M9.8 1 V12.8 L1.3 6.9 Z M30 1 V12.8 L38.5 6.9 Z"/></svg>
<div class="a" style="left:74.3px;top:991px;width:1px;height:25px;background:#cfcfcf"></div>
<div class="t" style="left:95.5px;top:998.3px;font-size:14.5px;letter-spacing:0.3px;color:#555;-webkit-text-stroke:0.2px #555">3.Output</div>
<div class="a" style="left:176.5px;top:988.5px;width:107.7px;height:28.8px;background:#fff;border-radius:0 0 4px 4px;box-shadow:0 0.8px 1.2px rgba(0,0,0,.35)"></div>
<div class="t b" style="left:196.3px;top:998.3px;font-size:14.5px;letter-spacing:0.4px;color:#2f7a4b">2.MODEL</div>
<div class="t" style="left:305.5px;top:998.3px;font-size:14.5px;letter-spacing:0.55px;color:#555;-webkit-text-stroke:0.2px #555">1.Inputs</div>
<div class="a" style="left:382.5px;top:991px;width:1px;height:25px;background:#cfcfcf"></div>
<svg class="a" style="left:400px;top:998.5px" width="14" height="14" viewBox="0 0 14 14" stroke="#444" stroke-width="1.7"><path d="M7 0.5 V13.5 M0.5 7 H13.5"/></svg>
<div class="a" style="left:428.8px;top:991px;width:1px;height:25px;background:#cfcfcf"></div>
<div class="a" style="left:0;top:1020.7px;width:809px;height:2px;background:#a9a9a9"></div>
<div class="a" style="left:0;top:1022.7px;width:809px;height:1.3px;background:#e4e4e4"></div>
</div></body></html>
